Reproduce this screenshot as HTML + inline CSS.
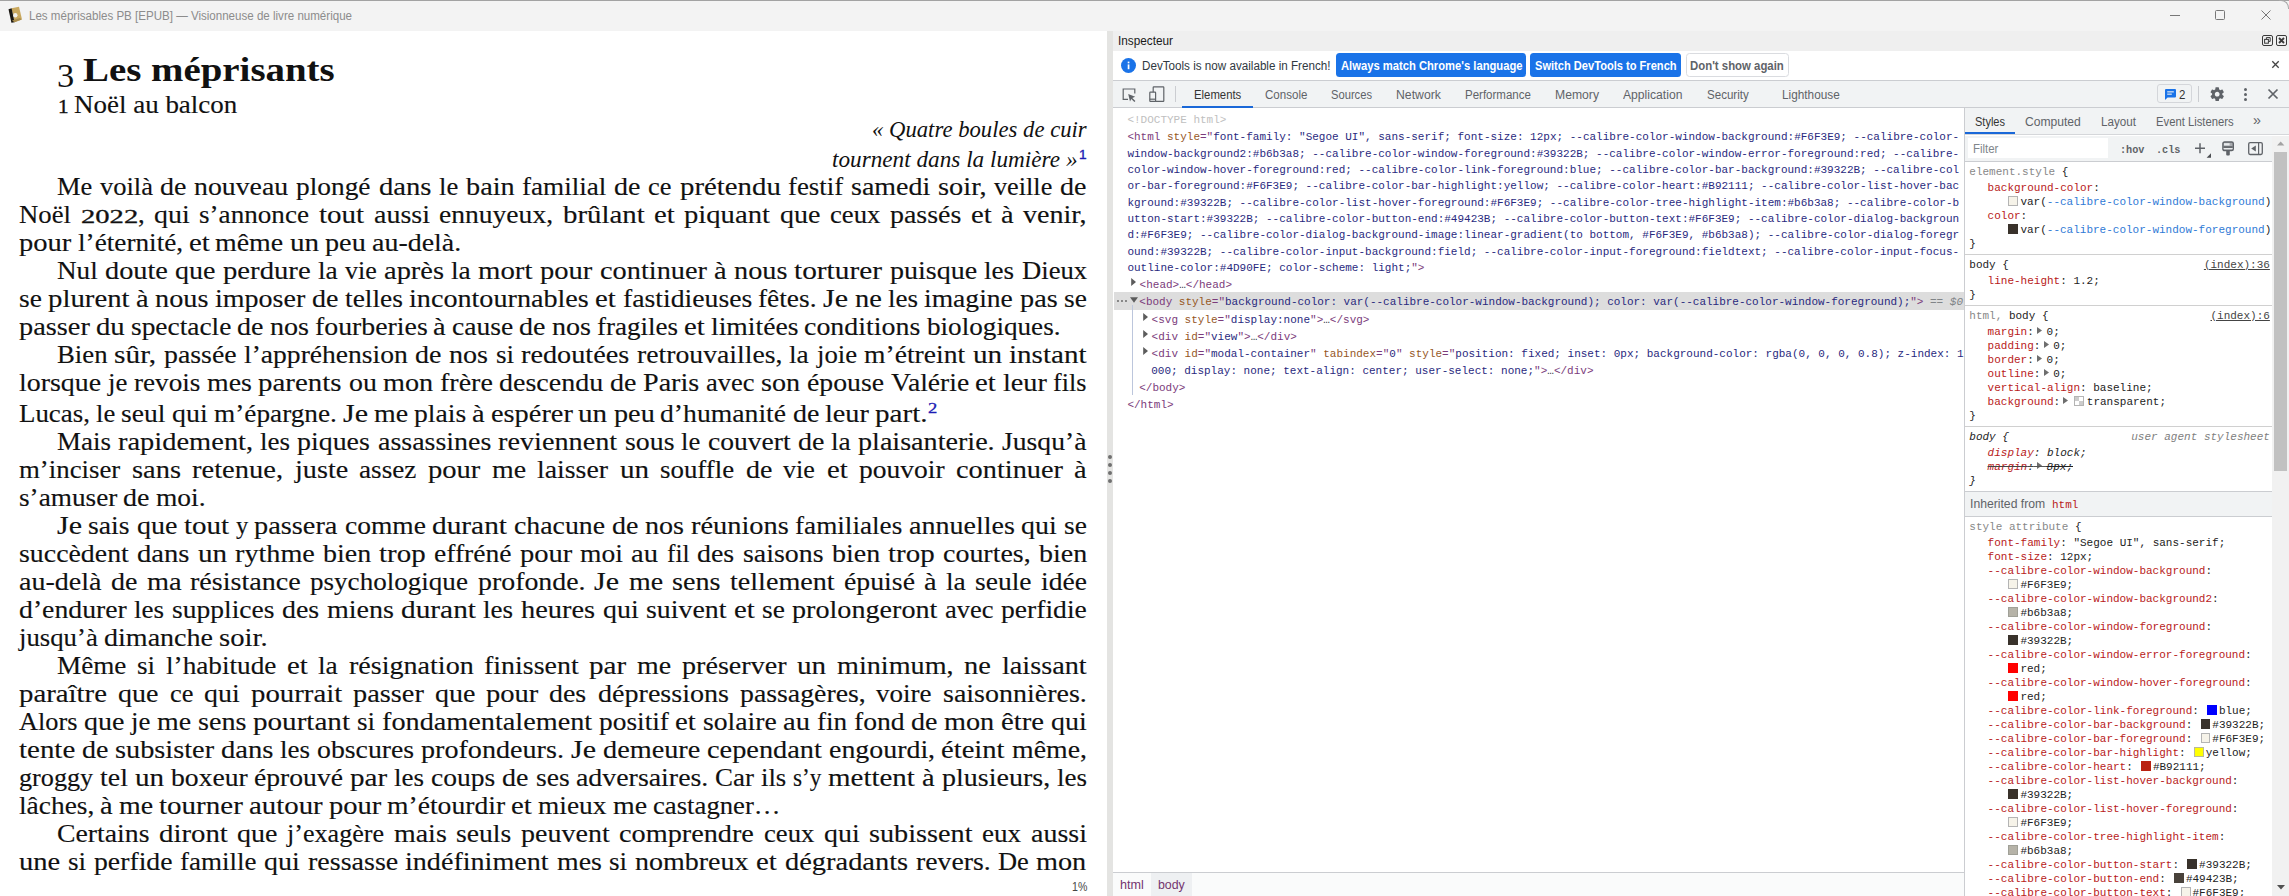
<!DOCTYPE html><html><head><meta charset="utf-8"><title>Visionneuse</title><style>
html,body{margin:0;padding:0;}html{overflow:hidden;width:2289px;height:896px;}
body{width:2289px;height:896px;position:relative;overflow:hidden;background:#fff;}
.t{position:absolute;white-space:pre;line-height:1;margin:0;padding:0;}
svg{position:absolute;overflow:visible}
</style></head><body>
<div style="position:absolute;left:0px;top:0px;width:2289px;height:31px;background:#f3f3f3;"></div>
<div style="position:absolute;left:0px;top:0px;width:2289px;height:1.3px;background:#a2a2a2;"></div>
<div style="position:absolute;left:2279px;top:0.3px;width:10px;height:9px;box-sizing:border-box;border-top:1.2px solid #a9a9a9;border-right:1.2px solid #a9a9a9;border-top-right-radius:8px;"></div>
<div style="position:absolute;left:2279px;top:887px;width:10px;height:9px;box-sizing:border-box;border-bottom:1.2px solid #a9a9a9;border-right:1.2px solid #a9a9a9;border-bottom-right-radius:8px;"></div>
<div style="position:absolute;left:0px;top:887px;width:10px;height:9px;box-sizing:border-box;border-bottom:1.2px solid #a9a9a9;border-left:1.2px solid #a9a9a9;border-bottom-left-radius:8px;"></div>
<div style="position:absolute;left:0px;top:31px;width:1107px;height:865px;background:#ffffff;"></div>
<div style="position:absolute;left:1107px;top:31px;width:6px;height:865px;background:#e4e4e2;"></div>
<div style="position:absolute;left:1113px;top:31px;width:1176px;height:19.5px;background:#efefef;"></div>
<div style="position:absolute;left:1113px;top:50.5px;width:1176px;height:30px;background:#ffffff;"></div>
<div style="position:absolute;left:1113px;top:80px;width:1176px;height:1px;background:#cbcdd1;"></div>
<div style="position:absolute;left:1113px;top:81px;width:1176px;height:26px;background:#f1f3f4;"></div>
<div style="position:absolute;left:1113px;top:107px;width:1176px;height:1px;background:#cbcdd1;"></div>
<div style="position:absolute;left:1182px;top:105.5px;width:71px;height:2.5px;background:#1a68d8;"></div>
<div style="position:absolute;left:1113px;top:108px;width:851px;height:764px;background:#ffffff;"></div>
<div style="position:absolute;left:1964px;top:108px;width:1px;height:788px;background:#cbcdd1;"></div>
<div style="position:absolute;left:1965px;top:108px;width:324px;height:26.5px;background:#f1f3f4;"></div>
<div style="position:absolute;left:1965px;top:132.3px;width:50px;height:2px;background:#1a68d8;"></div>
<div style="position:absolute;left:1965px;top:134px;width:324px;height:1px;background:#d5d7da;"></div>
<div style="position:absolute;left:1965px;top:135.5px;width:324px;height:26px;background:#f1f3f4;"></div>
<div style="position:absolute;left:1968px;top:138px;width:140px;height:20px;background:#ffffff;"></div>
<div style="position:absolute;left:1965px;top:161px;width:307px;height:1px;background:#cbcdd1;"></div>
<div style="position:absolute;left:1965px;top:162px;width:307px;height:734px;background:#ffffff;"></div>
<div style="position:absolute;left:2272px;top:135.5px;width:17px;height:760.5px;background:#f1f1f1;"></div>
<div style="position:absolute;left:2274px;top:152px;width:13px;height:318.5px;background:#c1c1c1;"></div>
<div style="position:absolute;left:1965px;top:254px;width:307px;height:1px;background:#d0d0d0;"></div>
<div style="position:absolute;left:1965px;top:305px;width:307px;height:1px;background:#d0d0d0;"></div>
<div style="position:absolute;left:1965px;top:426px;width:307px;height:1px;background:#d0d0d0;"></div>
<div style="position:absolute;left:1965px;top:491px;width:307px;height:25.5px;background:#f1f3f4;"></div>
<div style="position:absolute;left:1965px;top:491px;width:307px;height:1px;background:#cbcdd1;"></div>
<div style="position:absolute;left:1965px;top:516px;width:307px;height:1px;background:#cbcdd1;"></div>
<div style="position:absolute;left:1113px;top:872px;width:851px;height:1px;background:#cbcdd1;"></div>
<div style="position:absolute;left:1113px;top:873px;width:851px;height:23px;background:#fafbfb;"></div>
<div style="position:absolute;left:1151px;top:873px;width:41px;height:23px;background:#eef0f2;"></div>
<div style="position:absolute;left:1114px;top:292px;width:850px;height:17.6px;background:#dddddd;"></div>
<div style="position:absolute;left:1132px;top:305px;width:1px;height:89.5px;background:#bcc6dc;"></div>
<div style="position:absolute;left:1108px;top:455px;width:4px;height:4px;background:#707070;border-radius:50%"></div>
<div style="position:absolute;left:1108px;top:463px;width:4px;height:4px;background:#707070;border-radius:50%"></div>
<div style="position:absolute;left:1108px;top:471px;width:4px;height:4px;background:#707070;border-radius:50%"></div>
<div style="position:absolute;left:1108px;top:479px;width:4px;height:4px;background:#707070;border-radius:50%"></div>
<svg style="left:7px;top:6px" width="16" height="18" viewBox="0 0 16 18">
<path d="M4.5 2.2 L12 0.8 L15 13.5 L7.5 16.2 Z" fill="#c9a85e"/>
<path d="M1.5 3.2 L4.6 2.2 L7.6 16.2 L4.4 16.8 Z" fill="#1a1712"/>
<circle cx="8.3" cy="9.3" r="2.2" fill="#f2f0ea"/>
<path d="M5 14.5 L13 12 L14.5 13.6 L7.5 16.2Z" fill="#a88c4e"/></svg>
<svg style="left:2160px;top:4px" width="120" height="24" viewBox="0 0 120 24" fill="none" stroke="#777" stroke-width="1">
<path d="M10 11.5 H20"/><rect x="55.5" y="6.5" width="9" height="9" rx="1"/><path d="M101.5 6.5 L110.5 15.5 M110.5 6.5 L101.5 15.5"/></svg>
<svg style="left:2262px;top:35px" width="26" height="11" viewBox="0 0 26 11" fill="none" stroke="#3a3a3a" stroke-width="1">
<rect x="0.5" y="0.5" width="10" height="10" rx="1.5"/><rect x="2.6" y="4.4" width="3.8" height="3.8"/><path d="M4.4 4.2 V2.6 H8.2 V6.4 H6.6"/>
<rect x="14.5" y="0.5" width="10" height="10" rx="1.5"/><path d="M17 3 L22 8 M22 3 L17 8" stroke-width="1.8"/></svg>
<svg style="left:1120.5px;top:57.5px" width="15" height="15" viewBox="0 0 15 15"><circle cx="7.5" cy="7.5" r="7.5" fill="#1a73e8"/>
<rect x="6.7" y="6.4" width="1.7" height="4.8" fill="#fff"/><rect x="6.7" y="3.6" width="1.7" height="1.7" fill="#fff"/></svg>
<div style="position:absolute;left:1336px;top:53px;width:190px;height:24px;background:#1a73e8;border-radius:3.5px"></div>
<div style="position:absolute;left:1530px;top:53px;width:151px;height:24px;background:#1a73e8;border-radius:3.5px"></div>
<div style="position:absolute;left:1685.5px;top:53px;width:103px;height:24px;background:#fff;border-radius:3.5px;box-sizing:border-box;border:1px solid #dadce0"></div>
<svg style="left:2271.5px;top:61px" width="7" height="7" viewBox="0 0 7 7" stroke="#444" stroke-width="1.3"><path d="M0.3 0.3 L6.7 6.7 M6.7 0.3 L0.3 6.7"/></svg>
<div style="position:absolute;left:1175px;top:86px;width:1px;height:16px;background:#cbcdd1;"></div>
<svg style="left:1122px;top:88px" width="15" height="15" viewBox="0 0 15 15" fill="none" stroke="#5f6368" stroke-width="1.2">
<path d="M6 11.4 H1.2 V1 H12.8 V5.6"/><path d="M6.2 6 L13.2 8.7 L10.3 9.9 L13.4 13 L12.4 14 L9.3 10.9 L8 13.6 Z" fill="#5f6368" stroke="none"/></svg>
<svg style="left:1148.5px;top:85.5px" width="16" height="17" viewBox="0 0 16 17" fill="none" stroke="#5f6368" stroke-width="1.2">
<rect x="4.2" y="0.8" width="10.6" height="14.6" rx="0.6"/><rect x="0.8" y="6.2" width="5.8" height="9.2" rx="0.6" fill="#f1f3f4"/><path d="M0.8 13.2 H6.6" /></svg>
<div style="position:absolute;left:2157.3px;top:84.3px;width:34.4px;height:19.2px;background:#f1f3f4;box-sizing:border-box;border:1px solid #d4d6da;border-radius:3px"></div>
<svg style="left:2164.5px;top:88.5px" width="11" height="11" viewBox="0 0 11 11"><path d="M1 0 H10 A1 1 0 0 1 11 1 V7.6 A1 1 0 0 1 10 8.6 H2.6 L0 11 V1 A1 1 0 0 1 1 0Z" fill="#1a73e8"/>
<rect x="2.2" y="2.3" width="6.6" height="1.1" fill="#f1f3f4"/><rect x="2.2" y="4.6" width="4.6" height="1.1" fill="#f1f3f4"/></svg>
<div style="position:absolute;left:2198px;top:86px;width:1px;height:16px;background:#cbcdd1;"></div>
<svg style="left:2208.7px;top:85.8px" width="16.4" height="16.4" viewBox="0 0 24 24"><path fill="#5f6368" d="M19.43 12.98c.04-.32.07-.64.07-.98s-.03-.66-.07-.98l2.11-1.65c.19-.15.24-.42.12-.64l-2-3.46c-.12-.22-.39-.3-.61-.22l-2.49 1c-.52-.4-1.08-.73-1.69-.98l-.38-2.65A.488.488 0 0 0 14 2h-4c-.25 0-.46.18-.49.42l-.38 2.65c-.61.25-1.17.59-1.69.98l-2.49-1c-.23-.09-.49 0-.61.22l-2 3.46c-.13.22-.07.49.12.64l2.11 1.65c-.04.32-.07.65-.07.98s.03.66.07.98l-2.11 1.65c-.19.15-.24.42-.12.64l2 3.46c.12.22.39.3.61.22l2.49-1c.52.4 1.08.73 1.69.98l.38 2.65c.03.24.24.42.49.42h4c.25 0 .46-.18.49-.42l.38-2.65c.61-.25 1.17-.59 1.69-.98l2.49 1c.23.09.49 0 .61-.22l2-3.46c.12-.22.07-.49-.12-.64l-2.11-1.65zM12 15.5c-1.93 0-3.500-1.57-3.500-3.500s1.570-3.500 3.500-3.500 3.500 1.570 3.500 3.500-1.570 3.500-3.500 3.500z"/></svg>
<div style="position:absolute;left:2244px;top:88.2px;width:3px;height:3px;background:#5f6368;border-radius:50%"></div>
<div style="position:absolute;left:2244px;top:93.1px;width:3px;height:3px;background:#5f6368;border-radius:50%"></div>
<div style="position:absolute;left:2244px;top:98.1px;width:3px;height:3px;background:#5f6368;border-radius:50%"></div>
<svg style="left:2268px;top:89px" width="10" height="10" viewBox="0 0 10 10" stroke="#5f6368" stroke-width="1.7"><path d="M0.5 0.5 L9.5 9.5 M9.5 0.5 L0.5 9.5"/></svg>
<svg style="left:2195px;top:143px" width="17" height="15" viewBox="0 0 17 15"><path d="M5 0.3 V10.3 M0 5.3 H10" stroke="#5f6368" stroke-width="1.5" fill="none"/><path d="M16 10.2 V14.7 H11.6Z" fill="#4a4d51"/></svg>
<svg style="left:2222px;top:141px" width="12" height="15" viewBox="0 0 12 15"><rect x="0.9" y="1" width="10.4" height="8.6" rx="1.6" fill="#a9acb0" stroke="#5f6368" stroke-width="1.4"/><rect x="1.6" y="5.2" width="9" height="1.7" fill="#5f6368"/><rect x="1.6" y="7" width="9" height="0.9" fill="#f1f3f4"/><rect x="2" y="2.2" width="5.6" height="2.2" fill="#e9ebed"/><rect x="4.2" y="9.6" width="3.6" height="4.9" rx="0.9" fill="#5f6368"/></svg>
<svg style="left:2248px;top:141.8px" width="15" height="13.2" viewBox="0 0 15 13.2"><rect x="0.7" y="0.7" width="13.6" height="11.8" rx="1.4" fill="none" stroke="#5f6368" stroke-width="1.3"/><path d="M10.6 0.7 V12.5" stroke="#5f6368" stroke-width="1.2"/><path d="M7.8 3.6 V9.6 L3.2 6.6Z" fill="#5f6368"/></svg>
<svg style="left:2276.8px;top:141.3px" width="7.4" height="4.6" viewBox="0 0 8 5"><path d="M0 5 L4 0.5 L8 5Z" fill="#a3a3a3"/></svg>
<svg style="left:2276.5px;top:885px" width="8" height="5" viewBox="0 0 8 5"><path d="M0 0 L4 4.5 L8 0Z" fill="#505050"/></svg>
<svg style="left:1131px;top:278.3px" width="5.4" height="8" viewBox="0 0 5.4 8"><path d="M0.2 0 L5 4 L0.2 8Z" fill="#5c5c5c"/></svg>
<div style="position:absolute;left:1117.2px;top:300px;width:1.8px;height:1.8px;background:#6e6e6e;border-radius:50%"></div>
<div style="position:absolute;left:1121.2px;top:300px;width:1.8px;height:1.8px;background:#6e6e6e;border-radius:50%"></div>
<div style="position:absolute;left:1125.2px;top:300px;width:1.8px;height:1.8px;background:#6e6e6e;border-radius:50%"></div>
<svg style="left:1129.7px;top:296.7px" width="8" height="6" viewBox="0 0 8 6"><path d="M0 0.3 H8 L4 5.7Z" fill="#5c5c5c"/></svg>
<svg style="left:1143px;top:313.3px" width="5.4" height="8" viewBox="0 0 5.4 8"><path d="M0.2 0 L5 4 L0.2 8Z" fill="#5c5c5c"/></svg>
<svg style="left:1143px;top:330.3px" width="5.4" height="8" viewBox="0 0 5.4 8"><path d="M0.2 0 L5 4 L0.2 8Z" fill="#5c5c5c"/></svg>
<svg style="left:1143px;top:347.3px" width="5.4" height="8" viewBox="0 0 5.4 8"><path d="M0.2 0 L5 4 L0.2 8Z" fill="#5c5c5c"/></svg>
<div style="position:absolute;left:2008.2px;top:196.4px;width:9.8px;height:9.8px;background:#F6F3E9;box-sizing:border-box;border:1px solid #b4b4b4"></div>
<div style="position:absolute;left:2008.2px;top:224.20000000000002px;width:9.8px;height:9.8px;background:#39322B;box-sizing:border-box;border:1px solid #39322B"></div>
<svg style="left:2037.0px;top:327.0px" width="5" height="7" viewBox="0 0 5 7"><path d="M0 0 L5 3.5 L0 7Z" fill="#6e6e6e"/></svg>
<svg style="left:2043.6px;top:341.0px" width="5" height="7" viewBox="0 0 5 7"><path d="M0 0 L5 3.5 L0 7Z" fill="#6e6e6e"/></svg>
<svg style="left:2037.0px;top:355.0px" width="5" height="7" viewBox="0 0 5 7"><path d="M0 0 L5 3.5 L0 7Z" fill="#6e6e6e"/></svg>
<svg style="left:2043.6px;top:369.0px" width="5" height="7" viewBox="0 0 5 7"><path d="M0 0 L5 3.5 L0 7Z" fill="#6e6e6e"/></svg>
<svg style="left:2063.3px;top:397.0px" width="5" height="7" viewBox="0 0 5 7"><path d="M0 0 L5 3.5 L0 7Z" fill="#6e6e6e"/></svg>
<div style="position:absolute;left:2074.3px;top:396.0px;width:9.8px;height:9.8px;box-sizing:border-box;border:1px solid #b4b4b4;background:#fff"><div style="position:absolute;left:0;top:0;width:4px;height:4px;background:#ccc"></div><div style="position:absolute;left:4px;top:4px;width:3.8px;height:3.8px;background:#ccc"></div></div>
<svg style="left:2037px;top:462.4px" width="5" height="7" viewBox="0 0 5 7"><path d="M0 0 L5 3.5 L0 7Z" fill="#6e6e6e"/></svg>
<div style="position:absolute;left:2033.8px;top:465.6px;width:13px;height:1px;background:#555;"></div>
<div style="position:absolute;left:2008.2px;top:579.1999999999999px;width:9.8px;height:9.8px;background:#F6F3E9;box-sizing:border-box;border:1px solid #b4b4b4"></div>
<div style="position:absolute;left:2008.2px;top:607.1999999999999px;width:9.8px;height:9.8px;background:#b6b3a8;box-sizing:border-box;border:1px solid #a0a097"></div>
<div style="position:absolute;left:2008.2px;top:635.1999999999999px;width:9.8px;height:9.8px;background:#39322B;box-sizing:border-box;border:1px solid #39322B"></div>
<div style="position:absolute;left:2008.2px;top:663.1999999999999px;width:9.8px;height:9.8px;background:#ff0000;box-sizing:border-box;border:1px solid #ff0000"></div>
<div style="position:absolute;left:2008.2px;top:691.1999999999999px;width:9.8px;height:9.8px;background:#ff0000;box-sizing:border-box;border:1px solid #ff0000"></div>
<div style="position:absolute;left:2207.2000000000003px;top:705.1999999999999px;width:9.8px;height:9.8px;background:#0000ff;box-sizing:border-box;border:1px solid #0000ff"></div>
<div style="position:absolute;left:2200.6px;top:719.1999999999999px;width:9.8px;height:9.8px;background:#39322B;box-sizing:border-box;border:1px solid #39322B"></div>
<div style="position:absolute;left:2200.6px;top:733.1999999999999px;width:9.8px;height:9.8px;background:#F6F3E9;box-sizing:border-box;border:1px solid #b4b4b4"></div>
<div style="position:absolute;left:2194.0px;top:747.1999999999999px;width:9.8px;height:9.8px;background:#ffff00;box-sizing:border-box;border:1px solid #b9b99a"></div>
<div style="position:absolute;left:2141.2000000000003px;top:761.1999999999999px;width:9.8px;height:9.8px;background:#B92111;box-sizing:border-box;border:1px solid #B92111"></div>
<div style="position:absolute;left:2008.2px;top:789.1999999999999px;width:9.8px;height:9.8px;background:#39322B;box-sizing:border-box;border:1px solid #39322B"></div>
<div style="position:absolute;left:2008.2px;top:817.1999999999999px;width:9.8px;height:9.8px;background:#F6F3E9;box-sizing:border-box;border:1px solid #b4b4b4"></div>
<div style="position:absolute;left:2008.2px;top:845.1999999999999px;width:9.8px;height:9.8px;background:#b6b3a8;box-sizing:border-box;border:1px solid #a0a097"></div>
<div style="position:absolute;left:2187.4px;top:859.1999999999999px;width:9.8px;height:9.8px;background:#39322B;box-sizing:border-box;border:1px solid #39322B"></div>
<div style="position:absolute;left:2174.2000000000003px;top:873.1999999999999px;width:9.8px;height:9.8px;background:#49423B;box-sizing:border-box;border:1px solid #49423B"></div>
<div style="position:absolute;left:2180.8px;top:887.1999999999999px;width:9.8px;height:9.8px;background:#F6F3E9;box-sizing:border-box;border:1px solid #b4b4b4"></div>
<div class="t" style="left:28.50px;top:9.70px;font-family:'Liberation Sans', sans-serif;font-size:12px;color:#8c8c8c;transform:scaleX(0.9634);transform-origin:0 0;">Les méprisables PB [EPUB] — Visionneuse de livre numérique</div>
<div class="t" style="left:1117.50px;top:34.80px;font-family:'Liberation Sans', sans-serif;font-size:12px;color:#1a1a1a;transform:scaleX(0.9813);transform-origin:0 0;">Inspecteur</div>
<div class="t" style="left:1141.70px;top:60.00px;font-family:'Liberation Sans', sans-serif;font-size:12px;color:#303942;transform:scaleX(0.9712);transform-origin:0 0;">DevTools is now available in French!</div>
<div class="t" style="left:1340.50px;top:60.00px;font-family:'Liberation Sans', sans-serif;font-size:12px;color:#fff;font-weight:bold;transform:scaleX(0.9344);transform-origin:0 0;">Always match Chrome's language</div>
<div class="t" style="left:1534.70px;top:60.00px;font-family:'Liberation Sans', sans-serif;font-size:12px;color:#fff;font-weight:bold;transform:scaleX(0.9246);transform-origin:0 0;">Switch DevTools to French</div>
<div class="t" style="left:1690.00px;top:60.00px;font-family:'Liberation Sans', sans-serif;font-size:12px;color:#5f6368;font-weight:bold;transform:scaleX(0.9488);transform-origin:0 0;">Don't show again</div>
<div class="t" style="left:1194.00px;top:88.80px;font-family:'Liberation Sans', sans-serif;font-size:12px;color:#333;transform:scaleX(0.9454);transform-origin:0 0;">Elements</div>
<div class="t" style="left:1264.60px;top:88.80px;font-family:'Liberation Sans', sans-serif;font-size:12px;color:#5f6368;transform:scaleX(0.9630);transform-origin:0 0;">Console</div>
<div class="t" style="left:1330.70px;top:88.80px;font-family:'Liberation Sans', sans-serif;font-size:12px;color:#5f6368;transform:scaleX(0.9312);transform-origin:0 0;">Sources</div>
<div class="t" style="left:1395.70px;top:88.80px;font-family:'Liberation Sans', sans-serif;font-size:12px;color:#5f6368;transform:scaleX(1.0201);transform-origin:0 0;">Network</div>
<div class="t" style="left:1465.10px;top:88.80px;font-family:'Liberation Sans', sans-serif;font-size:12px;color:#5f6368;transform:scaleX(0.9592);transform-origin:0 0;">Performance</div>
<div class="t" style="left:1555.00px;top:88.80px;font-family:'Liberation Sans', sans-serif;font-size:12px;color:#5f6368;transform:scaleX(1.0151);transform-origin:0 0;">Memory</div>
<div class="t" style="left:1622.80px;top:88.80px;font-family:'Liberation Sans', sans-serif;font-size:12px;color:#5f6368;transform:scaleX(1.0116);transform-origin:0 0;">Application</div>
<div class="t" style="left:1706.60px;top:88.80px;font-family:'Liberation Sans', sans-serif;font-size:12px;color:#5f6368;transform:scaleX(0.9640);transform-origin:0 0;">Security</div>
<div class="t" style="left:1782.20px;top:88.80px;font-family:'Liberation Sans', sans-serif;font-size:12px;color:#5f6368;transform:scaleX(0.9827);transform-origin:0 0;">Lighthouse</div>
<div class="t" style="left:2178.70px;top:88.70px;font-family:'Liberation Sans', sans-serif;font-size:12px;color:#333;transform:scaleX(0.9570);transform-origin:0 0;">2</div>
<div class="t" style="left:1974.80px;top:115.80px;font-family:'Liberation Sans', sans-serif;font-size:12px;color:#333;transform:scaleX(0.9178);transform-origin:0 0;">Styles</div>
<div class="t" style="left:2024.70px;top:115.80px;font-family:'Liberation Sans', sans-serif;font-size:12px;color:#5f6368;transform:scaleX(1.0077);transform-origin:0 0;">Computed</div>
<div class="t" style="left:2101.00px;top:115.80px;font-family:'Liberation Sans', sans-serif;font-size:12px;color:#5f6368;transform:scaleX(0.9714);transform-origin:0 0;">Layout</div>
<div class="t" style="left:2156.20px;top:115.80px;font-family:'Liberation Sans', sans-serif;font-size:12px;color:#5f6368;transform:scaleX(0.9381);transform-origin:0 0;">Event Listeners</div>
<div class="t" style="left:2252.50px;top:113.30px;font-family:'Liberation Sans', sans-serif;font-size:14px;color:#5f6368;transform:scaleX(1.0261);transform-origin:0 0;">»</div>
<div class="t" style="left:1972.60px;top:142.90px;font-family:'Liberation Sans', sans-serif;font-size:12px;color:#80868b;transform:scaleX(0.9523);transform-origin:0 0;">Filter</div>
<div class="t" style="left:2119.50px;top:144.50px;font-family:'Liberation Mono', monospace;font-size:11px;color:#5f6368;font-weight:bold;transform:scaleX(0.9278);transform-origin:0 0;">:hov</div>
<div class="t" style="left:2156.20px;top:144.50px;font-family:'Liberation Mono', monospace;font-size:11px;color:#5f6368;font-weight:bold;transform:scaleX(0.9278);transform-origin:0 0;">.cls</div>
<div class="t" style="left:1120.40px;top:878.70px;font-family:'Liberation Sans', sans-serif;font-size:12px;color:#74356f;transform:scaleX(1.0498);transform-origin:0 0;">html</div>
<div class="t" style="left:1158.40px;top:878.70px;font-family:'Liberation Sans', sans-serif;font-size:12px;color:#74356f;transform:scaleX(1.0295);transform-origin:0 0;">body</div>
<div class="t" style="left:1072.00px;top:880.60px;font-family:'Liberation Sans', sans-serif;font-size:12px;color:#454545;transform:scaleX(0.8822);transform-origin:0 0;">1%</div>
<div class="t" style="left:1127.40px;top:114.60px;font-family:'Liberation Mono', monospace;font-size:11px;color:#303942;"><span style="color:#c0c0c0;">&lt;!DOCTYPE html&gt;</span></div>
<div class="t" style="left:1127.40px;top:131.80px;font-family:'Liberation Mono', monospace;font-size:11px;color:#303942;"><span style="color:#7b3b7b;">&lt;html</span><span style="color:#96571f;"> style</span><span style="color:#7b3b7b;">="</span><span style="color:#29297e;">font-family</span><span style="color:#29297e;">: "Segoe UI", sans-serif; font-size: 12px; --calibre-color-window-background:#F6F3E9; --calibre-color-</span></div>
<div class="t" style="left:1127.40px;top:148.75px;font-family:'Liberation Mono', monospace;font-size:11px;color:#303942;"><span style="color:#29297e;">window-background2:#b6b3a8; --calibre-color-window-foreground:#39322B; --calibre-color-window-error-foreground:red; --calibre-</span></div>
<div class="t" style="left:1127.40px;top:165.20px;font-family:'Liberation Mono', monospace;font-size:11px;color:#303942;"><span style="color:#29297e;">color-window-hover-foreground:red; --calibre-color-link-foreground:blue; --calibre-color-bar-background:#39322B; --calibre-col</span></div>
<div class="t" style="left:1127.40px;top:181.25px;font-family:'Liberation Mono', monospace;font-size:11px;color:#303942;"><span style="color:#29297e;">or-bar-foreground:#F6F3E9; --calibre-color-bar-highlight:yellow; --calibre-color-heart:#B92111; --calibre-color-list-hover-bac</span></div>
<div class="t" style="left:1127.40px;top:197.90px;font-family:'Liberation Mono', monospace;font-size:11px;color:#303942;"><span style="color:#29297e;">kground:#39322B; --calibre-color-list-hover-foreground:#F6F3E9; --calibre-color-tree-highlight-item:#b6b3a8; --calibre-color-b</span></div>
<div class="t" style="left:1127.40px;top:213.90px;font-family:'Liberation Mono', monospace;font-size:11px;color:#303942;"><span style="color:#29297e;">utton-start:#39322B; --calibre-color-button-end:#49423B; --calibre-color-button-text:#F6F3E9; --calibre-color-dialog-backgroun</span></div>
<div class="t" style="left:1127.40px;top:229.80px;font-family:'Liberation Mono', monospace;font-size:11px;color:#303942;"><span style="color:#29297e;">d:#F6F3E9; --calibre-color-dialog-background-image:linear-gradient(to bottom, #F6F3E9, #b6b3a8); --calibre-color-dialog-foregr</span></div>
<div class="t" style="left:1127.40px;top:246.80px;font-family:'Liberation Mono', monospace;font-size:11px;color:#303942;"><span style="color:#29297e;">ound:#39322B; --calibre-color-input-background:field; --calibre-color-input-foreground:fieldtext; --calibre-color-input-focus-</span></div>
<div class="t" style="left:1127.40px;top:262.70px;font-family:'Liberation Mono', monospace;font-size:11px;color:#303942;"><span style="color:#29297e;">outline-color:#4D90FE; color-scheme: light;</span><span style="color:#7b3b7b;">"&gt;</span></div>
<div class="t" style="left:1139.60px;top:280.00px;font-family:'Liberation Mono', monospace;font-size:11px;color:#303942;"><span style="color:#7b3b7b;">&lt;head&gt;</span><span style="color:#303942;">…</span><span style="color:#7b3b7b;">&lt;/head&gt;</span></div>
<div class="t" style="left:1139.30px;top:297.00px;font-family:'Liberation Mono', monospace;font-size:11px;color:#303942;letter-spacing:-0.012px;"><span style="color:#7b3b7b;">&lt;body</span><span style="color:#96571f;"> style</span><span style="color:#7b3b7b;">="</span><span style="color:#29297e;">background-color: var(--calibre-color-window-background); color: var(--calibre-color-window-foreground);</span><span style="color:#7b3b7b;">"&gt;</span><span style="color:#808488;"> == </span><span style="color:#808488;font-style:italic">$0</span></div>
<div class="t" style="left:1151.60px;top:314.90px;font-family:'Liberation Mono', monospace;font-size:11px;color:#303942;"><span style="color:#7b3b7b;">&lt;svg</span><span style="color:#96571f;"> style</span><span style="color:#7b3b7b;">="</span><span style="color:#29297e;">display:none</span><span style="color:#7b3b7b;">"&gt;</span><span style="color:#303942;">…</span><span style="color:#7b3b7b;">&lt;/svg&gt;</span></div>
<div class="t" style="left:1151.60px;top:331.80px;font-family:'Liberation Mono', monospace;font-size:11px;color:#303942;"><span style="color:#7b3b7b;">&lt;div</span><span style="color:#96571f;"> id</span><span style="color:#7b3b7b;">="</span><span style="color:#29297e;">view</span><span style="color:#7b3b7b;">"&gt;</span><span style="color:#303942;">…</span><span style="color:#7b3b7b;">&lt;/div&gt;</span></div>
<div class="t" style="left:1151.60px;top:348.80px;font-family:'Liberation Mono', monospace;font-size:11px;color:#303942;"><span style="color:#7b3b7b;">&lt;div</span><span style="color:#96571f;"> id</span><span style="color:#7b3b7b;">="</span><span style="color:#29297e;">modal-container</span><span style="color:#7b3b7b;">"</span><span style="color:#96571f;"> tabindex</span><span style="color:#7b3b7b;">="</span><span style="color:#29297e;">0</span><span style="color:#7b3b7b;">"</span><span style="color:#96571f;"> style</span><span style="color:#7b3b7b;">="</span><span style="color:#29297e;">position: fixed; inset: 0px; background-color: rgba(0, 0, 0, 0.8); z-index: 1</span></div>
<div class="t" style="left:1151.20px;top:365.75px;font-family:'Liberation Mono', monospace;font-size:11px;color:#303942;"><span style="color:#29297e;">000; display: none; text-align: center; user-select: none;</span><span style="color:#7b3b7b;">"&gt;</span><span style="color:#303942;">…</span><span style="color:#7b3b7b;">&lt;/div&gt;</span></div>
<div class="t" style="left:1139.20px;top:382.70px;font-family:'Liberation Mono', monospace;font-size:11px;color:#303942;"><span style="color:#7b3b7b;">&lt;/body&gt;</span></div>
<div class="t" style="left:1127.40px;top:399.90px;font-family:'Liberation Mono', monospace;font-size:11px;color:#303942;"><span style="color:#7b3b7b;">&lt;/html&gt;</span></div>
<div class="t" style="left:1969.30px;top:166.70px;font-family:'Liberation Mono', monospace;font-size:11px;color:#222;"><span style="color:#888;">element.style</span><span style="color:#222;"> {</span></div>
<div class="t" style="left:1987.60px;top:182.70px;font-family:'Liberation Mono', monospace;font-size:11px;color:#222;"><span style="color:#b81a1a;">background-color</span><span style="color:#222;">:</span></div>
<div class="t" style="left:2020.40px;top:197.00px;font-family:'Liberation Mono', monospace;font-size:11px;color:#222;"><span style="color:#222;">var(</span><span style="color:#2f7ad6;">--calibre-color-window-background</span><span style="color:#222;">)</span></div>
<div class="t" style="left:1987.60px;top:210.70px;font-family:'Liberation Mono', monospace;font-size:11px;color:#222;"><span style="color:#b81a1a;">color</span><span style="color:#222;">:</span></div>
<div class="t" style="left:2020.40px;top:224.80px;font-family:'Liberation Mono', monospace;font-size:11px;color:#222;"><span style="color:#222;">var(</span><span style="color:#2f7ad6;">--calibre-color-window-foreground</span><span style="color:#222;">)</span></div>
<div class="t" style="left:1969.30px;top:238.60px;font-family:'Liberation Mono', monospace;font-size:11px;color:#222;">}</div>
<div class="t" style="left:1969.30px;top:259.80px;font-family:'Liberation Mono', monospace;font-size:11px;color:#222;">body {</div>
<div class="t" style="left:2203.88px;top:259.80px;font-family:'Liberation Mono', monospace;font-size:11px;color:#222;"><span style="color:#444;text-decoration:underline">(index):36</span></div>
<div class="t" style="left:1987.60px;top:275.70px;font-family:'Liberation Mono', monospace;font-size:11px;color:#222;"><span style="color:#b81a1a;">line-height</span><span style="color:#222;">: 1.2;</span></div>
<div class="t" style="left:1969.30px;top:289.50px;font-family:'Liberation Mono', monospace;font-size:11px;color:#222;">}</div>
<div class="t" style="left:1969.30px;top:310.80px;font-family:'Liberation Mono', monospace;font-size:11px;color:#222;"><span style="color:#888;">html, </span><span style="color:#222;">body {</span></div>
<div class="t" style="left:2210.48px;top:310.80px;font-family:'Liberation Mono', monospace;font-size:11px;color:#222;"><span style="color:#444;text-decoration:underline">(index):6</span></div>
<div class="t" style="left:1987.60px;top:326.60px;font-family:'Liberation Mono', monospace;font-size:11px;color:#222;"><span style="color:#b81a1a;">margin</span><span style="color:#222;">:</span></div>
<div class="t" style="left:2046.60px;top:326.60px;font-family:'Liberation Mono', monospace;font-size:11px;color:#222;">0;</div>
<div class="t" style="left:1987.60px;top:340.60px;font-family:'Liberation Mono', monospace;font-size:11px;color:#222;"><span style="color:#b81a1a;">padding</span><span style="color:#222;">:</span></div>
<div class="t" style="left:2053.20px;top:340.60px;font-family:'Liberation Mono', monospace;font-size:11px;color:#222;">0;</div>
<div class="t" style="left:1987.60px;top:354.60px;font-family:'Liberation Mono', monospace;font-size:11px;color:#222;"><span style="color:#b81a1a;">border</span><span style="color:#222;">:</span></div>
<div class="t" style="left:2046.60px;top:354.60px;font-family:'Liberation Mono', monospace;font-size:11px;color:#222;">0;</div>
<div class="t" style="left:1987.60px;top:368.60px;font-family:'Liberation Mono', monospace;font-size:11px;color:#222;"><span style="color:#b81a1a;">outline</span><span style="color:#222;">:</span></div>
<div class="t" style="left:2053.20px;top:368.60px;font-family:'Liberation Mono', monospace;font-size:11px;color:#222;">0;</div>
<div class="t" style="left:1987.60px;top:382.60px;font-family:'Liberation Mono', monospace;font-size:11px;color:#222;"><span style="color:#b81a1a;">vertical-align</span><span style="color:#222;">: baseline;</span></div>
<div class="t" style="left:1987.60px;top:396.60px;font-family:'Liberation Mono', monospace;font-size:11px;color:#222;"><span style="color:#b81a1a;">background</span><span style="color:#222;">:</span></div>
<div class="t" style="left:2086.80px;top:396.60px;font-family:'Liberation Mono', monospace;font-size:11px;color:#222;">transparent;</div>
<div class="t" style="left:1969.30px;top:410.60px;font-family:'Liberation Mono', monospace;font-size:11px;color:#222;">}</div>
<div class="t" style="left:1969.30px;top:431.90px;font-family:'Liberation Mono', monospace;font-size:11px;color:#222;font-style:italic;">body {</div>
<div class="t" style="left:2131.28px;top:431.90px;font-family:'Liberation Mono', monospace;font-size:11px;color:#222;font-style:italic;"><span style="color:#808080;">user agent stylesheet</span></div>
<div class="t" style="left:1987.60px;top:447.80px;font-family:'Liberation Mono', monospace;font-size:11px;color:#222;font-style:italic;"><span style="color:#b81a1a;">display</span><span style="color:#222;">: block;</span></div>
<div class="t" style="left:1987.60px;top:462.00px;font-family:'Liberation Mono', monospace;font-size:11px;color:#222;font-style:italic;text-decoration:line-through;text-decoration-color:#444;"><span style="color:#b81a1a;">margin</span><span style="color:#222;">:</span></div>
<div class="t" style="left:2046.60px;top:462.00px;font-family:'Liberation Mono', monospace;font-size:11px;color:#222;font-style:italic;text-decoration:line-through;">8px;</div>
<div class="t" style="left:1969.30px;top:475.80px;font-family:'Liberation Mono', monospace;font-size:11px;color:#222;font-style:italic;">}</div>
<div class="t" style="left:1970.30px;top:498.00px;font-family:'Liberation Sans', sans-serif;font-size:12px;color:#5f6368;transform:scaleX(1.0156);transform-origin:0 0;">Inherited from</div>
<div class="t" style="left:2052.00px;top:500.00px;font-family:'Liberation Mono', monospace;font-size:11px;color:#222;"><span style="color:#b81a1a;">html</span></div>
<div class="t" style="left:1969.30px;top:521.80px;font-family:'Liberation Mono', monospace;font-size:11px;color:#222;"><span style="color:#888;">style attribute</span><span style="color:#222;"> {</span></div>
<div class="t" style="left:1987.60px;top:537.80px;font-family:'Liberation Mono', monospace;font-size:11px;color:#222;"><span style="color:#b81a1a;">font-family</span><span style="color:#222;">: "Segoe UI", sans-serif;</span></div>
<div class="t" style="left:1987.60px;top:551.80px;font-family:'Liberation Mono', monospace;font-size:11px;color:#222;"><span style="color:#b81a1a;">font-size</span><span style="color:#222;">: 12px;</span></div>
<div class="t" style="left:1987.60px;top:565.80px;font-family:'Liberation Mono', monospace;font-size:11px;color:#222;"><span style="color:#b81a1a;">--calibre-color-window-background</span><span style="color:#222;">:</span></div>
<div class="t" style="left:2020.40px;top:579.80px;font-family:'Liberation Mono', monospace;font-size:11px;color:#222;">#F6F3E9;</div>
<div class="t" style="left:1987.60px;top:593.80px;font-family:'Liberation Mono', monospace;font-size:11px;color:#222;"><span style="color:#b81a1a;">--calibre-color-window-background2</span><span style="color:#222;">:</span></div>
<div class="t" style="left:2020.40px;top:607.80px;font-family:'Liberation Mono', monospace;font-size:11px;color:#222;">#b6b3a8;</div>
<div class="t" style="left:1987.60px;top:621.80px;font-family:'Liberation Mono', monospace;font-size:11px;color:#222;"><span style="color:#b81a1a;">--calibre-color-window-foreground</span><span style="color:#222;">:</span></div>
<div class="t" style="left:2020.40px;top:635.80px;font-family:'Liberation Mono', monospace;font-size:11px;color:#222;">#39322B;</div>
<div class="t" style="left:1987.60px;top:649.80px;font-family:'Liberation Mono', monospace;font-size:11px;color:#222;"><span style="color:#b81a1a;">--calibre-color-window-error-foreground</span><span style="color:#222;">:</span></div>
<div class="t" style="left:2020.40px;top:663.80px;font-family:'Liberation Mono', monospace;font-size:11px;color:#222;">red;</div>
<div class="t" style="left:1987.60px;top:677.80px;font-family:'Liberation Mono', monospace;font-size:11px;color:#222;"><span style="color:#b81a1a;">--calibre-color-window-hover-foreground</span><span style="color:#222;">:</span></div>
<div class="t" style="left:2020.40px;top:691.80px;font-family:'Liberation Mono', monospace;font-size:11px;color:#222;">red;</div>
<div class="t" style="left:1987.60px;top:705.80px;font-family:'Liberation Mono', monospace;font-size:11px;color:#222;"><span style="color:#b81a1a;">--calibre-color-link-foreground</span><span style="color:#222;">:</span></div>
<div class="t" style="left:2218.90px;top:705.80px;font-family:'Liberation Mono', monospace;font-size:11px;color:#222;">blue;</div>
<div class="t" style="left:1987.60px;top:719.80px;font-family:'Liberation Mono', monospace;font-size:11px;color:#222;"><span style="color:#b81a1a;">--calibre-color-bar-background</span><span style="color:#222;">:</span></div>
<div class="t" style="left:2212.30px;top:719.80px;font-family:'Liberation Mono', monospace;font-size:11px;color:#222;">#39322B;</div>
<div class="t" style="left:1987.60px;top:733.80px;font-family:'Liberation Mono', monospace;font-size:11px;color:#222;"><span style="color:#b81a1a;">--calibre-color-bar-foreground</span><span style="color:#222;">:</span></div>
<div class="t" style="left:2212.30px;top:733.80px;font-family:'Liberation Mono', monospace;font-size:11px;color:#222;">#F6F3E9;</div>
<div class="t" style="left:1987.60px;top:747.80px;font-family:'Liberation Mono', monospace;font-size:11px;color:#222;"><span style="color:#b81a1a;">--calibre-color-bar-highlight</span><span style="color:#222;">:</span></div>
<div class="t" style="left:2205.70px;top:747.80px;font-family:'Liberation Mono', monospace;font-size:11px;color:#222;">yellow;</div>
<div class="t" style="left:1987.60px;top:761.80px;font-family:'Liberation Mono', monospace;font-size:11px;color:#222;"><span style="color:#b81a1a;">--calibre-color-heart</span><span style="color:#222;">:</span></div>
<div class="t" style="left:2152.90px;top:761.80px;font-family:'Liberation Mono', monospace;font-size:11px;color:#222;">#B92111;</div>
<div class="t" style="left:1987.60px;top:775.80px;font-family:'Liberation Mono', monospace;font-size:11px;color:#222;"><span style="color:#b81a1a;">--calibre-color-list-hover-background</span><span style="color:#222;">:</span></div>
<div class="t" style="left:2020.40px;top:789.80px;font-family:'Liberation Mono', monospace;font-size:11px;color:#222;">#39322B;</div>
<div class="t" style="left:1987.60px;top:803.80px;font-family:'Liberation Mono', monospace;font-size:11px;color:#222;"><span style="color:#b81a1a;">--calibre-color-list-hover-foreground</span><span style="color:#222;">:</span></div>
<div class="t" style="left:2020.40px;top:817.80px;font-family:'Liberation Mono', monospace;font-size:11px;color:#222;">#F6F3E9;</div>
<div class="t" style="left:1987.60px;top:831.80px;font-family:'Liberation Mono', monospace;font-size:11px;color:#222;"><span style="color:#b81a1a;">--calibre-color-tree-highlight-item</span><span style="color:#222;">:</span></div>
<div class="t" style="left:2020.40px;top:845.80px;font-family:'Liberation Mono', monospace;font-size:11px;color:#222;">#b6b3a8;</div>
<div class="t" style="left:1987.60px;top:859.80px;font-family:'Liberation Mono', monospace;font-size:11px;color:#222;"><span style="color:#b81a1a;">--calibre-color-button-start</span><span style="color:#222;">:</span></div>
<div class="t" style="left:2199.10px;top:859.80px;font-family:'Liberation Mono', monospace;font-size:11px;color:#222;">#39322B;</div>
<div class="t" style="left:1987.60px;top:873.80px;font-family:'Liberation Mono', monospace;font-size:11px;color:#222;"><span style="color:#b81a1a;">--calibre-color-button-end</span><span style="color:#222;">:</span></div>
<div class="t" style="left:2185.90px;top:873.80px;font-family:'Liberation Mono', monospace;font-size:11px;color:#222;">#49423B;</div>
<div class="t" style="left:1987.60px;top:887.80px;font-family:'Liberation Mono', monospace;font-size:11px;color:#222;"><span style="color:#b81a1a;">--calibre-color-button-text</span><span style="color:#222;">:</span></div>
<div class="t" style="left:2192.50px;top:887.80px;font-family:'Liberation Mono', monospace;font-size:11px;color:#222;">#F6F3E9;</div>
<div class="t" style="left:57.40px;top:58.90px;font-family:'Liberation Serif', serif;font-size:34px;color:#111;transform:scaleX(1.0118);transform-origin:0 0;">3</div>
<div class="t" style="left:83.30px;top:53.80px;font-family:'Liberation Serif', serif;font-size:33px;color:#111;font-weight:bold;transform:scaleX(1.1784);transform-origin:0 0;">Les méprisants</div>
<div class="t" style="left:57.60px;top:97.70px;font-family:'Liberation Serif', serif;font-size:18.5px;color:#111;transform:scaleX(1.1459);transform-origin:0 0;-webkit-text-stroke:0.35px #111;">1</div>
<div class="t" style="left:74.00px;top:91.70px;font-family:'Liberation Serif', serif;font-size:26px;color:#111;transform:scaleX(1.0375);transform-origin:0 0;-webkit-text-stroke:0.15px #111;">Noël au balcon</div>
<div class="t" style="left:872.00px;top:118.50px;font-family:'Liberation Serif', serif;font-size:22.5px;color:#111;font-style:italic;transform:scaleX(1.0085);transform-origin:0 0;">« Quatre boules de cuir</div>
<div class="t" style="left:831.50px;top:148.60px;font-family:'Liberation Serif', serif;font-size:22.5px;color:#111;font-style:italic;transform:scaleX(1.0319);transform-origin:0 0;">tournent dans la lumière »</div>
<div class="t" style="left:1079.00px;top:147.70px;font-family:'Liberation Sans', sans-serif;font-size:13px;color:#1c1cb4;transform:scaleX(1.0505);transform-origin:0 0;-webkit-text-stroke:0.35px #1c1cb4;">1</div>
<div class="t" style="left:56.60px;top:173.60px;font-family:'Liberation Serif', serif;font-size:26.0px;color:#111;transform:scaleX(1.0171);transform-origin:0 0;-webkit-text-stroke:0.15px #111;">Me</div>
<div class="t" style="left:99.59px;top:173.60px;font-family:'Liberation Serif', serif;font-size:26.0px;color:#111;transform:scaleX(1.0193);transform-origin:0 0;-webkit-text-stroke:0.15px #111;">voilà</div>
<div class="t" style="left:160.32px;top:173.60px;font-family:'Liberation Serif', serif;font-size:26.0px;color:#111;transform:scaleX(1.0771);transform-origin:0 0;-webkit-text-stroke:0.15px #111;">de</div>
<div class="t" style="left:194.49px;top:173.60px;font-family:'Liberation Serif', serif;font-size:26.0px;color:#111;transform:scaleX(1.0685);transform-origin:0 0;-webkit-text-stroke:0.15px #111;">nouveau</div>
<div class="t" style="left:296.35px;top:173.60px;font-family:'Liberation Serif', serif;font-size:26.0px;color:#111;transform:scaleX(1.0529);transform-origin:0 0;-webkit-text-stroke:0.15px #111;">plongé</div>
<div class="t" style="left:378.58px;top:173.60px;font-family:'Liberation Serif', serif;font-size:26.0px;color:#111;transform:scaleX(1.1013);transform-origin:0 0;-webkit-text-stroke:0.15px #111;">dans</div>
<div class="t" style="left:438.81px;top:173.60px;font-family:'Liberation Serif', serif;font-size:26.0px;color:#111;transform:scaleX(1.0265);transform-origin:0 0;-webkit-text-stroke:0.15px #111;">le</div>
<div class="t" style="left:465.80px;top:173.60px;font-family:'Liberation Serif', serif;font-size:26.0px;color:#111;transform:scaleX(1.0872);transform-origin:0 0;-webkit-text-stroke:0.15px #111;">bain</div>
<div class="t" style="left:522.20px;top:173.60px;font-family:'Liberation Serif', serif;font-size:26.0px;color:#111;transform:scaleX(1.0429);transform-origin:0 0;-webkit-text-stroke:0.15px #111;">familial</div>
<div class="t" style="left:614.25px;top:173.60px;font-family:'Liberation Serif', serif;font-size:26.0px;color:#111;transform:scaleX(1.0771);transform-origin:0 0;-webkit-text-stroke:0.15px #111;">de</div>
<div class="t" style="left:648.42px;top:173.60px;font-family:'Liberation Serif', serif;font-size:26.0px;color:#111;transform:scaleX(1.0154);transform-origin:0 0;-webkit-text-stroke:0.15px #111;">ce</div>
<div class="t" style="left:679.60px;top:173.60px;font-family:'Liberation Serif', serif;font-size:26.0px;color:#111;transform:scaleX(1.1085);transform-origin:0 0;-webkit-text-stroke:0.15px #111;">prétendu</div>
<div class="t" style="left:788.17px;top:173.60px;font-family:'Liberation Serif', serif;font-size:26.0px;color:#111;transform:scaleX(1.0319);transform-origin:0 0;-webkit-text-stroke:0.15px #111;">festif</div>
<div class="t" style="left:851.02px;top:173.60px;font-family:'Liberation Serif', serif;font-size:26.0px;color:#111;transform:scaleX(1.0751);transform-origin:0 0;-webkit-text-stroke:0.15px #111;">samedi</div>
<div class="t" style="left:937.93px;top:173.60px;font-family:'Liberation Serif', serif;font-size:26.0px;color:#111;transform:scaleX(1.0925);transform-origin:0 0;-webkit-text-stroke:0.15px #111;">soir,</div>
<div class="t" style="left:994.24px;top:173.60px;font-family:'Liberation Serif', serif;font-size:26.0px;color:#111;transform:scaleX(1.0091);transform-origin:0 0;-webkit-text-stroke:0.15px #111;">veille</div>
<div class="t" style="left:1060.26px;top:173.60px;font-family:'Liberation Serif', serif;font-size:26.0px;color:#111;transform:scaleX(1.0771);transform-origin:0 0;-webkit-text-stroke:0.15px #111;">de</div>
<div class="t" style="left:19.10px;top:201.60px;font-family:'Liberation Serif', serif;font-size:26.0px;color:#111;transform:scaleX(1.0271);transform-origin:0 0;-webkit-text-stroke:0.15px #111;">Noël</div>
<div class="t" style="left:80.56px;top:206.60px;font-family:'Liberation Serif', serif;font-size:19.5px;color:#111;transform:scaleX(1.4677);transform-origin:0 0;-webkit-text-stroke:0.3px #111;">2022</div>
<div class="t" style="left:137.80px;top:201.60px;font-family:'Liberation Serif', serif;font-size:26.0px;color:#111;transform:scaleX(1.0367);transform-origin:0 0;-webkit-text-stroke:0.15px #111;">,</div>
<div class="t" style="left:154.09px;top:201.60px;font-family:'Liberation Serif', serif;font-size:26.0px;color:#111;transform:scaleX(1.0740);transform-origin:0 0;-webkit-text-stroke:0.15px #111;">qui</div>
<div class="t" style="left:199.33px;top:201.60px;font-family:'Liberation Serif', serif;font-size:26.0px;color:#111;transform:scaleX(1.0433);transform-origin:0 0;-webkit-text-stroke:0.15px #111;">s’annonce</div>
<div class="t" style="left:318.85px;top:201.60px;font-family:'Liberation Serif', serif;font-size:26.0px;color:#111;transform:scaleX(1.1159);transform-origin:0 0;-webkit-text-stroke:0.15px #111;">tout</div>
<div class="t" style="left:373.54px;top:201.60px;font-family:'Liberation Serif', serif;font-size:26.0px;color:#111;transform:scaleX(1.0752);transform-origin:0 0;-webkit-text-stroke:0.15px #111;">aussi</div>
<div class="t" style="left:439.00px;top:201.60px;font-family:'Liberation Serif', serif;font-size:26.0px;color:#111;transform:scaleX(1.0603);transform-origin:0 0;-webkit-text-stroke:0.15px #111;">ennuyeux,</div>
<div class="t" style="left:562.63px;top:201.60px;font-family:'Liberation Serif', serif;font-size:26.0px;color:#111;transform:scaleX(1.1102);transform-origin:0 0;-webkit-text-stroke:0.15px #111;">brûlant</div>
<div class="t" style="left:653.96px;top:201.60px;font-family:'Liberation Serif', serif;font-size:26.0px;color:#111;transform:scaleX(1.1052);transform-origin:0 0;-webkit-text-stroke:0.15px #111;">et</div>
<div class="t" style="left:684.24px;top:201.60px;font-family:'Liberation Serif', serif;font-size:26.0px;color:#111;transform:scaleX(1.1022);transform-origin:0 0;-webkit-text-stroke:0.15px #111;">piquant</div>
<div class="t" style="left:779.77px;top:201.60px;font-family:'Liberation Serif', serif;font-size:26.0px;color:#111;transform:scaleX(1.0778);transform-origin:0 0;-webkit-text-stroke:0.15px #111;">que</div>
<div class="t" style="left:829.78px;top:201.60px;font-family:'Liberation Serif', serif;font-size:26.0px;color:#111;transform:scaleX(1.0267);transform-origin:0 0;-webkit-text-stroke:0.15px #111;">ceux</div>
<div class="t" style="left:889.73px;top:201.60px;font-family:'Liberation Serif', serif;font-size:26.0px;color:#111;transform:scaleX(1.0745);transform-origin:0 0;-webkit-text-stroke:0.15px #111;">passés</div>
<div class="t" style="left:970.67px;top:201.60px;font-family:'Liberation Serif', serif;font-size:26.0px;color:#111;transform:scaleX(1.1052);transform-origin:0 0;-webkit-text-stroke:0.15px #111;">et</div>
<div class="t" style="left:1000.96px;top:201.60px;font-family:'Liberation Serif', serif;font-size:26.0px;color:#111;transform:scaleX(1.0910);transform-origin:0 0;-webkit-text-stroke:0.15px #111;">à</div>
<div class="t" style="left:1023.10px;top:201.60px;font-family:'Liberation Serif', serif;font-size:26.0px;color:#111;transform:scaleX(1.0799);transform-origin:0 0;-webkit-text-stroke:0.15px #111;">venir,</div>
<div class="t" style="left:19.10px;top:229.60px;font-family:'Liberation Serif', serif;font-size:26.0px;color:#111;transform:scaleX(1.0988);transform-origin:0 0;-webkit-text-stroke:0.15px #111;">pour</div>
<div class="t" style="left:77.51px;top:229.60px;font-family:'Liberation Serif', serif;font-size:26.0px;color:#111;transform:scaleX(1.0482);transform-origin:0 0;-webkit-text-stroke:0.15px #111;">l’éternité,</div>
<div class="t" style="left:188.72px;top:229.60px;font-family:'Liberation Serif', serif;font-size:26.0px;color:#111;transform:scaleX(1.1052);transform-origin:0 0;-webkit-text-stroke:0.15px #111;">et</div>
<div class="t" style="left:215.49px;top:229.60px;font-family:'Liberation Serif', serif;font-size:26.0px;color:#111;transform:scaleX(1.0741);transform-origin:0 0;-webkit-text-stroke:0.15px #111;">même</div>
<div class="t" style="left:289.75px;top:229.60px;font-family:'Liberation Serif', serif;font-size:26.0px;color:#111;transform:scaleX(1.1207);transform-origin:0 0;-webkit-text-stroke:0.15px #111;">un</div>
<div class="t" style="left:324.92px;top:229.60px;font-family:'Liberation Serif', serif;font-size:26.0px;color:#111;transform:scaleX(1.0856);transform-origin:0 0;-webkit-text-stroke:0.15px #111;">peu</div>
<div class="t" style="left:371.71px;top:229.60px;font-family:'Liberation Serif', serif;font-size:26.0px;color:#111;transform:scaleX(1.0753);transform-origin:0 0;-webkit-text-stroke:0.15px #111;">au-delà.</div>
<div class="t" style="left:56.60px;top:257.60px;font-family:'Liberation Serif', serif;font-size:26.0px;color:#111;transform:scaleX(1.0442);transform-origin:0 0;-webkit-text-stroke:0.15px #111;">Nul</div>
<div class="t" style="left:104.62px;top:257.60px;font-family:'Liberation Serif', serif;font-size:26.0px;color:#111;transform:scaleX(1.0896);transform-origin:0 0;-webkit-text-stroke:0.15px #111;">doute</div>
<div class="t" style="left:174.85px;top:257.60px;font-family:'Liberation Serif', serif;font-size:26.0px;color:#111;transform:scaleX(1.0778);transform-origin:0 0;-webkit-text-stroke:0.15px #111;">que</div>
<div class="t" style="left:222.61px;top:257.60px;font-family:'Liberation Serif', serif;font-size:26.0px;color:#111;transform:scaleX(1.1042);transform-origin:0 0;-webkit-text-stroke:0.15px #111;">perdure</div>
<div class="t" style="left:317.58px;top:257.60px;font-family:'Liberation Serif', serif;font-size:26.0px;color:#111;transform:scaleX(1.0532);transform-origin:0 0;-webkit-text-stroke:0.15px #111;">la</div>
<div class="t" style="left:344.64px;top:257.60px;font-family:'Liberation Serif', serif;font-size:26.0px;color:#111;transform:scaleX(1.0030);transform-origin:0 0;-webkit-text-stroke:0.15px #111;">vie</div>
<div class="t" style="left:383.79px;top:257.60px;font-family:'Liberation Serif', serif;font-size:26.0px;color:#111;transform:scaleX(1.0941);transform-origin:0 0;-webkit-text-stroke:0.15px #111;">après</div>
<div class="t" style="left:451.11px;top:257.60px;font-family:'Liberation Serif', serif;font-size:26.0px;color:#111;transform:scaleX(1.0532);transform-origin:0 0;-webkit-text-stroke:0.15px #111;">la</div>
<div class="t" style="left:478.16px;top:257.60px;font-family:'Liberation Serif', serif;font-size:26.0px;color:#111;transform:scaleX(1.1074);transform-origin:0 0;-webkit-text-stroke:0.15px #111;">mort</div>
<div class="t" style="left:539.84px;top:257.60px;font-family:'Liberation Serif', serif;font-size:26.0px;color:#111;transform:scaleX(1.0988);transform-origin:0 0;-webkit-text-stroke:0.15px #111;">pour</div>
<div class="t" style="left:599.51px;top:257.60px;font-family:'Liberation Serif', serif;font-size:26.0px;color:#111;transform:scaleX(1.0901);transform-origin:0 0;-webkit-text-stroke:0.15px #111;">continuer</div>
<div class="t" style="left:713.83px;top:257.60px;font-family:'Liberation Serif', serif;font-size:26.0px;color:#111;transform:scaleX(1.0910);transform-origin:0 0;-webkit-text-stroke:0.15px #111;">à</div>
<div class="t" style="left:733.73px;top:257.60px;font-family:'Liberation Serif', serif;font-size:26.0px;color:#111;transform:scaleX(1.0874);transform-origin:0 0;-webkit-text-stroke:0.15px #111;">nous</div>
<div class="t" style="left:794.44px;top:257.60px;font-family:'Liberation Serif', serif;font-size:26.0px;color:#111;transform:scaleX(1.1282);transform-origin:0 0;-webkit-text-stroke:0.15px #111;">torturer</div>
<div class="t" style="left:889.69px;top:257.60px;font-family:'Liberation Serif', serif;font-size:26.0px;color:#111;transform:scaleX(1.0787);transform-origin:0 0;-webkit-text-stroke:0.15px #111;">puisque</div>
<div class="t" style="left:984.24px;top:257.60px;font-family:'Liberation Serif', serif;font-size:26.0px;color:#111;transform:scaleX(1.0407);transform-origin:0 0;-webkit-text-stroke:0.15px #111;">les</div>
<div class="t" style="left:1021.60px;top:257.60px;font-family:'Liberation Serif', serif;font-size:26.0px;color:#111;transform:scaleX(1.0244);transform-origin:0 0;-webkit-text-stroke:0.15px #111;">Dieux</div>
<div class="t" style="left:19.10px;top:285.60px;font-family:'Liberation Serif', serif;font-size:26.0px;color:#111;transform:scaleX(1.0567);transform-origin:0 0;-webkit-text-stroke:0.15px #111;">se</div>
<div class="t" style="left:48.42px;top:285.60px;font-family:'Liberation Serif', serif;font-size:26.0px;color:#111;transform:scaleX(1.1074);transform-origin:0 0;-webkit-text-stroke:0.15px #111;">plurent</div>
<div class="t" style="left:136.40px;top:285.60px;font-family:'Liberation Serif', serif;font-size:26.0px;color:#111;transform:scaleX(1.0910);transform-origin:0 0;-webkit-text-stroke:0.15px #111;">à</div>
<div class="t" style="left:155.41px;top:285.60px;font-family:'Liberation Serif', serif;font-size:26.0px;color:#111;transform:scaleX(1.0874);transform-origin:0 0;-webkit-text-stroke:0.15px #111;">nous</div>
<div class="t" style="left:215.24px;top:285.60px;font-family:'Liberation Serif', serif;font-size:26.0px;color:#111;transform:scaleX(1.0774);transform-origin:0 0;-webkit-text-stroke:0.15px #111;">imposer</div>
<div class="t" style="left:311.90px;top:285.60px;font-family:'Liberation Serif', serif;font-size:26.0px;color:#111;transform:scaleX(1.0771);transform-origin:0 0;-webkit-text-stroke:0.15px #111;">de</div>
<div class="t" style="left:344.76px;top:285.60px;font-family:'Liberation Serif', serif;font-size:26.0px;color:#111;transform:scaleX(1.0564);transform-origin:0 0;-webkit-text-stroke:0.15px #111;">telles</div>
<div class="t" style="left:409.14px;top:285.60px;font-family:'Liberation Serif', serif;font-size:26.0px;color:#111;transform:scaleX(1.0828);transform-origin:0 0;-webkit-text-stroke:0.15px #111;">incontournables</div>
<div class="t" style="left:595.38px;top:285.60px;font-family:'Liberation Serif', serif;font-size:26.0px;color:#111;transform:scaleX(1.1052);transform-origin:0 0;-webkit-text-stroke:0.15px #111;">et</div>
<div class="t" style="left:622.53px;top:285.60px;font-family:'Liberation Serif', serif;font-size:26.0px;color:#111;transform:scaleX(1.0662);transform-origin:0 0;-webkit-text-stroke:0.15px #111;">fastidieuses</div>
<div class="t" style="left:758.30px;top:285.60px;font-family:'Liberation Serif', serif;font-size:26.0px;color:#111;transform:scaleX(1.0524);transform-origin:0 0;-webkit-text-stroke:0.15px #111;">fêtes.</div>
<div class="t" style="left:823.22px;top:285.60px;font-family:'Liberation Serif', serif;font-size:26.0px;color:#111;transform:scaleX(1.1558);transform-origin:0 0;-webkit-text-stroke:0.15px #111;">Je</div>
<div class="t" style="left:854.68px;top:285.60px;font-family:'Liberation Serif', serif;font-size:26.0px;color:#111;transform:scaleX(1.0940);transform-origin:0 0;-webkit-text-stroke:0.15px #111;">ne</div>
<div class="t" style="left:887.95px;top:285.60px;font-family:'Liberation Serif', serif;font-size:26.0px;color:#111;transform:scaleX(1.0407);transform-origin:0 0;-webkit-text-stroke:0.15px #111;">les</div>
<div class="t" style="left:924.43px;top:285.60px;font-family:'Liberation Serif', serif;font-size:26.0px;color:#111;transform:scaleX(1.0608);transform-origin:0 0;-webkit-text-stroke:0.15px #111;">imagine</div>
<div class="t" style="left:1019.70px;top:285.60px;font-family:'Liberation Serif', serif;font-size:26.0px;color:#111;transform:scaleX(1.0868);transform-origin:0 0;-webkit-text-stroke:0.15px #111;">pas</div>
<div class="t" style="left:1063.80px;top:285.60px;font-family:'Liberation Serif', serif;font-size:26.0px;color:#111;transform:scaleX(1.0567);transform-origin:0 0;-webkit-text-stroke:0.15px #111;">se</div>
<div class="t" style="left:19.10px;top:313.60px;font-family:'Liberation Serif', serif;font-size:26.0px;color:#111;transform:scaleX(1.0899);transform-origin:0 0;-webkit-text-stroke:0.15px #111;">passer</div>
<div class="t" style="left:95.96px;top:313.60px;font-family:'Liberation Serif', serif;font-size:26.0px;color:#111;transform:scaleX(1.1047);transform-origin:0 0;-webkit-text-stroke:0.15px #111;">du</div>
<div class="t" style="left:130.71px;top:313.60px;font-family:'Liberation Serif', serif;font-size:26.0px;color:#111;transform:scaleX(1.0538);transform-origin:0 0;-webkit-text-stroke:0.15px #111;">spectacle</div>
<div class="t" style="left:237.13px;top:313.60px;font-family:'Liberation Serif', serif;font-size:26.0px;color:#111;transform:scaleX(1.0771);transform-origin:0 0;-webkit-text-stroke:0.15px #111;">de</div>
<div class="t" style="left:269.60px;top:313.60px;font-family:'Liberation Serif', serif;font-size:26.0px;color:#111;transform:scaleX(1.0806);transform-origin:0 0;-webkit-text-stroke:0.15px #111;">nos</div>
<div class="t" style="left:314.67px;top:313.60px;font-family:'Liberation Serif', serif;font-size:26.0px;color:#111;transform:scaleX(1.0700);transform-origin:0 0;-webkit-text-stroke:0.15px #111;">fourberies</div>
<div class="t" style="left:433.48px;top:313.60px;font-family:'Liberation Serif', serif;font-size:26.0px;color:#111;transform:scaleX(1.0910);transform-origin:0 0;-webkit-text-stroke:0.15px #111;">à</div>
<div class="t" style="left:452.11px;top:313.60px;font-family:'Liberation Serif', serif;font-size:26.0px;color:#111;transform:scaleX(1.0603);transform-origin:0 0;-webkit-text-stroke:0.15px #111;">cause</div>
<div class="t" style="left:519.37px;top:313.60px;font-family:'Liberation Serif', serif;font-size:26.0px;color:#111;transform:scaleX(1.0771);transform-origin:0 0;-webkit-text-stroke:0.15px #111;">de</div>
<div class="t" style="left:551.84px;top:313.60px;font-family:'Liberation Serif', serif;font-size:26.0px;color:#111;transform:scaleX(1.0806);transform-origin:0 0;-webkit-text-stroke:0.15px #111;">nos</div>
<div class="t" style="left:596.91px;top:313.60px;font-family:'Liberation Serif', serif;font-size:26.0px;color:#111;transform:scaleX(1.0400);transform-origin:0 0;-webkit-text-stroke:0.15px #111;">fragiles</div>
<div class="t" style="left:684.03px;top:313.60px;font-family:'Liberation Serif', serif;font-size:26.0px;color:#111;transform:scaleX(1.1052);transform-origin:0 0;-webkit-text-stroke:0.15px #111;">et</div>
<div class="t" style="left:710.80px;top:313.60px;font-family:'Liberation Serif', serif;font-size:26.0px;color:#111;transform:scaleX(1.0625);transform-origin:0 0;-webkit-text-stroke:0.15px #111;">limitées</div>
<div class="t" style="left:804.31px;top:313.60px;font-family:'Liberation Serif', serif;font-size:26.0px;color:#111;transform:scaleX(1.0731);transform-origin:0 0;-webkit-text-stroke:0.15px #111;">conditions</div>
<div class="t" style="left:926.60px;top:313.60px;font-family:'Liberation Serif', serif;font-size:26.0px;color:#111;transform:scaleX(1.0442);transform-origin:0 0;-webkit-text-stroke:0.15px #111;">biologiques.</div>
<div class="t" style="left:56.60px;top:341.60px;font-family:'Liberation Serif', serif;font-size:26.0px;color:#111;transform:scaleX(1.0286);transform-origin:0 0;-webkit-text-stroke:0.15px #111;">Bien</div>
<div class="t" style="left:114.49px;top:341.60px;font-family:'Liberation Serif', serif;font-size:26.0px;color:#111;transform:scaleX(1.1319);transform-origin:0 0;-webkit-text-stroke:0.15px #111;">sûr,</div>
<div class="t" style="left:164.03px;top:341.60px;font-family:'Liberation Serif', serif;font-size:26.0px;color:#111;transform:scaleX(1.0710);transform-origin:0 0;-webkit-text-stroke:0.15px #111;">passée</div>
<div class="t" style="left:244.09px;top:341.60px;font-family:'Liberation Serif', serif;font-size:26.0px;color:#111;transform:scaleX(1.0601);transform-origin:0 0;-webkit-text-stroke:0.15px #111;">l’appréhension</div>
<div class="t" style="left:415.28px;top:341.60px;font-family:'Liberation Serif', serif;font-size:26.0px;color:#111;transform:scaleX(1.0771);transform-origin:0 0;-webkit-text-stroke:0.15px #111;">de</div>
<div class="t" style="left:449.10px;top:341.60px;font-family:'Liberation Serif', serif;font-size:26.0px;color:#111;transform:scaleX(1.0806);transform-origin:0 0;-webkit-text-stroke:0.15px #111;">nos</div>
<div class="t" style="left:495.52px;top:341.60px;font-family:'Liberation Serif', serif;font-size:26.0px;color:#111;transform:scaleX(1.0452);transform-origin:0 0;-webkit-text-stroke:0.15px #111;">si</div>
<div class="t" style="left:521.02px;top:341.60px;font-family:'Liberation Serif', serif;font-size:26.0px;color:#111;transform:scaleX(1.0859);transform-origin:0 0;-webkit-text-stroke:0.15px #111;">redoutées</div>
<div class="t" style="left:636.58px;top:341.60px;font-family:'Liberation Serif', serif;font-size:26.0px;color:#111;transform:scaleX(1.0656);transform-origin:0 0;-webkit-text-stroke:0.15px #111;">retrouvailles,</div>
<div class="t" style="left:789.37px;top:341.60px;font-family:'Liberation Serif', serif;font-size:26.0px;color:#111;transform:scaleX(1.0532);transform-origin:0 0;-webkit-text-stroke:0.15px #111;">la</div>
<div class="t" style="left:816.51px;top:341.60px;font-family:'Liberation Serif', serif;font-size:26.0px;color:#111;transform:scaleX(1.0304);transform-origin:0 0;-webkit-text-stroke:0.15px #111;">joie</div>
<div class="t" style="left:864.08px;top:341.60px;font-family:'Liberation Serif', serif;font-size:26.0px;color:#111;transform:scaleX(1.0619);transform-origin:0 0;-webkit-text-stroke:0.15px #111;">m’étreint</div>
<div class="t" style="left:972.66px;top:341.60px;font-family:'Liberation Serif', serif;font-size:26.0px;color:#111;transform:scaleX(1.1207);transform-origin:0 0;-webkit-text-stroke:0.15px #111;">un</div>
<div class="t" style="left:1009.17px;top:341.60px;font-family:'Liberation Serif', serif;font-size:26.0px;color:#111;transform:scaleX(1.1180);transform-origin:0 0;-webkit-text-stroke:0.15px #111;">instant</div>
<div class="t" style="left:19.10px;top:369.60px;font-family:'Liberation Serif', serif;font-size:26.0px;color:#111;transform:scaleX(1.0732);transform-origin:0 0;-webkit-text-stroke:0.15px #111;">lorsque</div>
<div class="t" style="left:107.88px;top:369.60px;font-family:'Liberation Serif', serif;font-size:26.0px;color:#111;transform:scaleX(1.0330);transform-origin:0 0;-webkit-text-stroke:0.15px #111;">je</div>
<div class="t" style="left:133.90px;top:369.60px;font-family:'Liberation Serif', serif;font-size:26.0px;color:#111;transform:scaleX(1.0446);transform-origin:0 0;-webkit-text-stroke:0.15px #111;">revois</div>
<div class="t" style="left:206.91px;top:369.60px;font-family:'Liberation Serif', serif;font-size:26.0px;color:#111;transform:scaleX(1.0724);transform-origin:0 0;-webkit-text-stroke:0.15px #111;">mes</div>
<div class="t" style="left:258.46px;top:369.60px;font-family:'Liberation Serif', serif;font-size:26.0px;color:#111;transform:scaleX(1.1109);transform-origin:0 0;-webkit-text-stroke:0.15px #111;">parents</div>
<div class="t" style="left:348.51px;top:369.60px;font-family:'Liberation Serif', serif;font-size:26.0px;color:#111;transform:scaleX(1.0714);transform-origin:0 0;-webkit-text-stroke:0.15px #111;">ou</div>
<div class="t" style="left:383.00px;top:369.60px;font-family:'Liberation Serif', serif;font-size:26.0px;color:#111;transform:scaleX(1.0870);transform-origin:0 0;-webkit-text-stroke:0.15px #111;">mon</div>
<div class="t" style="left:439.89px;top:369.60px;font-family:'Liberation Serif', serif;font-size:26.0px;color:#111;transform:scaleX(1.0763);transform-origin:0 0;-webkit-text-stroke:0.15px #111;">frère</div>
<div class="t" style="left:499.32px;top:369.60px;font-family:'Liberation Serif', serif;font-size:26.0px;color:#111;transform:scaleX(1.0767);transform-origin:0 0;-webkit-text-stroke:0.15px #111;">descendu</div>
<div class="t" style="left:610.13px;top:369.60px;font-family:'Liberation Serif', serif;font-size:26.0px;color:#111;transform:scaleX(1.0771);transform-origin:0 0;-webkit-text-stroke:0.15px #111;">de</div>
<div class="t" style="left:643.20px;top:369.60px;font-family:'Liberation Serif', serif;font-size:26.0px;color:#111;transform:scaleX(1.0810);transform-origin:0 0;-webkit-text-stroke:0.15px #111;">Paris</div>
<div class="t" style="left:706.04px;top:369.60px;font-family:'Liberation Serif', serif;font-size:26.0px;color:#111;transform:scaleX(1.0181);transform-origin:0 0;-webkit-text-stroke:0.15px #111;">avec</div>
<div class="t" style="left:761.16px;top:369.60px;font-family:'Liberation Serif', serif;font-size:26.0px;color:#111;transform:scaleX(1.0806);transform-origin:0 0;-webkit-text-stroke:0.15px #111;">son</div>
<div class="t" style="left:806.82px;top:369.60px;font-family:'Liberation Serif', serif;font-size:26.0px;color:#111;transform:scaleX(1.0683);transform-origin:0 0;-webkit-text-stroke:0.15px #111;">épouse</div>
<div class="t" style="left:890.59px;top:369.60px;font-family:'Liberation Serif', serif;font-size:26.0px;color:#111;transform:scaleX(1.0618);transform-origin:0 0;-webkit-text-stroke:0.15px #111;">Valérie</div>
<div class="t" style="left:975.39px;top:369.60px;font-family:'Liberation Serif', serif;font-size:26.0px;color:#111;transform:scaleX(1.1052);transform-origin:0 0;-webkit-text-stroke:0.15px #111;">et</div>
<div class="t" style="left:1002.76px;top:369.60px;font-family:'Liberation Serif', serif;font-size:26.0px;color:#111;transform:scaleX(1.0857);transform-origin:0 0;-webkit-text-stroke:0.15px #111;">leur</div>
<div class="t" style="left:1053.28px;top:369.60px;font-family:'Liberation Serif', serif;font-size:26.0px;color:#111;transform:scaleX(1.0057);transform-origin:0 0;-webkit-text-stroke:0.15px #111;">fils</div>
<div class="t" style="left:19.10px;top:400.60px;font-family:'Liberation Serif', serif;font-size:26.0px;color:#111;transform:scaleX(1.0343);transform-origin:0 0;-webkit-text-stroke:0.15px #111;">Lucas,</div>
<div class="t" style="left:96.08px;top:400.60px;font-family:'Liberation Serif', serif;font-size:26.0px;color:#111;transform:scaleX(1.0265);transform-origin:0 0;-webkit-text-stroke:0.15px #111;">le</div>
<div class="t" style="left:121.37px;top:400.60px;font-family:'Liberation Serif', serif;font-size:26.0px;color:#111;transform:scaleX(1.0610);transform-origin:0 0;-webkit-text-stroke:0.15px #111;">seul</div>
<div class="t" style="left:171.85px;top:400.60px;font-family:'Liberation Serif', serif;font-size:26.0px;color:#111;transform:scaleX(1.0740);transform-origin:0 0;-webkit-text-stroke:0.15px #111;">qui</div>
<div class="t" style="left:213.57px;top:400.60px;font-family:'Liberation Serif', serif;font-size:26.0px;color:#111;transform:scaleX(1.0489);transform-origin:0 0;-webkit-text-stroke:0.15px #111;">m’épargne.</div>
<div class="t" style="left:342.54px;top:400.60px;font-family:'Liberation Serif', serif;font-size:26.0px;color:#111;transform:scaleX(1.1558);transform-origin:0 0;-webkit-text-stroke:0.15px #111;">Je</div>
<div class="t" style="left:373.62px;top:400.60px;font-family:'Liberation Serif', serif;font-size:26.0px;color:#111;transform:scaleX(1.0741);transform-origin:0 0;-webkit-text-stroke:0.15px #111;">me</div>
<div class="t" style="left:413.77px;top:400.60px;font-family:'Liberation Serif', serif;font-size:26.0px;color:#111;transform:scaleX(1.0624);transform-origin:0 0;-webkit-text-stroke:0.15px #111;">plais</div>
<div class="t" style="left:471.97px;top:400.60px;font-family:'Liberation Serif', serif;font-size:26.0px;color:#111;transform:scaleX(1.0910);transform-origin:0 0;-webkit-text-stroke:0.15px #111;">à</div>
<div class="t" style="left:490.60px;top:400.60px;font-family:'Liberation Serif', serif;font-size:26.0px;color:#111;transform:scaleX(1.0906);transform-origin:0 0;-webkit-text-stroke:0.15px #111;">espérer</div>
<div class="t" style="left:578.49px;top:400.60px;font-family:'Liberation Serif', serif;font-size:26.0px;color:#111;transform:scaleX(1.1207);transform-origin:0 0;-webkit-text-stroke:0.15px #111;">un</div>
<div class="t" style="left:613.66px;top:400.60px;font-family:'Liberation Serif', serif;font-size:26.0px;color:#111;transform:scaleX(1.0856);transform-origin:0 0;-webkit-text-stroke:0.15px #111;">peu</div>
<div class="t" style="left:660.45px;top:400.60px;font-family:'Liberation Serif', serif;font-size:26.0px;color:#111;transform:scaleX(1.0647);transform-origin:0 0;-webkit-text-stroke:0.15px #111;">d’humanité</div>
<div class="t" style="left:792.56px;top:400.60px;font-family:'Liberation Serif', serif;font-size:26.0px;color:#111;transform:scaleX(1.0771);transform-origin:0 0;-webkit-text-stroke:0.15px #111;">de</div>
<div class="t" style="left:825.03px;top:400.60px;font-family:'Liberation Serif', serif;font-size:26.0px;color:#111;transform:scaleX(1.0857);transform-origin:0 0;-webkit-text-stroke:0.15px #111;">leur</div>
<div class="t" style="left:874.95px;top:400.60px;font-family:'Liberation Serif', serif;font-size:26.0px;color:#111;transform:scaleX(1.1189);transform-origin:0 0;-webkit-text-stroke:0.15px #111;">part.</div>
<div class="t" style="left:56.60px;top:428.60px;font-family:'Liberation Serif', serif;font-size:26.0px;color:#111;transform:scaleX(1.0364);transform-origin:0 0;-webkit-text-stroke:0.15px #111;">Mais</div>
<div class="t" style="left:117.73px;top:428.60px;font-family:'Liberation Serif', serif;font-size:26.0px;color:#111;transform:scaleX(1.0947);transform-origin:0 0;-webkit-text-stroke:0.15px #111;">rapidement,</div>
<div class="t" style="left:260.11px;top:428.60px;font-family:'Liberation Serif', serif;font-size:26.0px;color:#111;transform:scaleX(1.0407);transform-origin:0 0;-webkit-text-stroke:0.15px #111;">les</div>
<div class="t" style="left:297.41px;top:428.60px;font-family:'Liberation Serif', serif;font-size:26.0px;color:#111;transform:scaleX(1.0734);transform-origin:0 0;-webkit-text-stroke:0.15px #111;">piques</div>
<div class="t" style="left:377.52px;top:428.60px;font-family:'Liberation Serif', serif;font-size:26.0px;color:#111;transform:scaleX(1.0754);transform-origin:0 0;-webkit-text-stroke:0.15px #111;">assassines</div>
<div class="t" style="left:498.14px;top:428.60px;font-family:'Liberation Serif', serif;font-size:26.0px;color:#111;transform:scaleX(1.0864);transform-origin:0 0;-webkit-text-stroke:0.15px #111;">reviennent</div>
<div class="t" style="left:624.59px;top:428.60px;font-family:'Liberation Serif', serif;font-size:26.0px;color:#111;transform:scaleX(1.0695);transform-origin:0 0;-webkit-text-stroke:0.15px #111;">sous</div>
<div class="t" style="left:681.29px;top:428.60px;font-family:'Liberation Serif', serif;font-size:26.0px;color:#111;transform:scaleX(1.0265);transform-origin:0 0;-webkit-text-stroke:0.15px #111;">le</div>
<div class="t" style="left:707.79px;top:428.60px;font-family:'Liberation Serif', serif;font-size:26.0px;color:#111;transform:scaleX(1.0598);transform-origin:0 0;-webkit-text-stroke:0.15px #111;">couvert</div>
<div class="t" style="left:797.65px;top:428.60px;font-family:'Liberation Serif', serif;font-size:26.0px;color:#111;transform:scaleX(1.0771);transform-origin:0 0;-webkit-text-stroke:0.15px #111;">de</div>
<div class="t" style="left:831.33px;top:428.60px;font-family:'Liberation Serif', serif;font-size:26.0px;color:#111;transform:scaleX(1.0532);transform-origin:0 0;-webkit-text-stroke:0.15px #111;">la</div>
<div class="t" style="left:858.32px;top:428.60px;font-family:'Liberation Serif', serif;font-size:26.0px;color:#111;transform:scaleX(1.0817);transform-origin:0 0;-webkit-text-stroke:0.15px #111;">plaisanterie.</div>
<div class="t" style="left:1002.23px;top:428.60px;font-family:'Liberation Serif', serif;font-size:26.0px;color:#111;transform:scaleX(1.0634);transform-origin:0 0;-webkit-text-stroke:0.15px #111;">Jusqu’à</div>
<div class="t" style="left:19.10px;top:456.60px;font-family:'Liberation Serif', serif;font-size:26.0px;color:#111;transform:scaleX(1.0316);transform-origin:0 0;-webkit-text-stroke:0.15px #111;">m’inciser</div>
<div class="t" style="left:131.76px;top:456.60px;font-family:'Liberation Serif', serif;font-size:26.0px;color:#111;transform:scaleX(1.0934);transform-origin:0 0;-webkit-text-stroke:0.15px #111;">sans</div>
<div class="t" style="left:192.10px;top:456.60px;font-family:'Liberation Serif', serif;font-size:26.0px;color:#111;transform:scaleX(1.0968);transform-origin:0 0;-webkit-text-stroke:0.15px #111;">retenue,</div>
<div class="t" style="left:294.52px;top:456.60px;font-family:'Liberation Serif', serif;font-size:26.0px;color:#111;transform:scaleX(1.0835);transform-origin:0 0;-webkit-text-stroke:0.15px #111;">juste</div>
<div class="t" style="left:359.10px;top:456.60px;font-family:'Liberation Serif', serif;font-size:26.0px;color:#111;transform:scaleX(1.0460);transform-origin:0 0;-webkit-text-stroke:0.15px #111;">assez</div>
<div class="t" style="left:427.86px;top:456.60px;font-family:'Liberation Serif', serif;font-size:26.0px;color:#111;transform:scaleX(1.0988);transform-origin:0 0;-webkit-text-stroke:0.15px #111;">pour</div>
<div class="t" style="left:491.61px;top:456.60px;font-family:'Liberation Serif', serif;font-size:26.0px;color:#111;transform:scaleX(1.0741);transform-origin:0 0;-webkit-text-stroke:0.15px #111;">me</div>
<div class="t" style="left:537.10px;top:456.60px;font-family:'Liberation Serif', serif;font-size:26.0px;color:#111;transform:scaleX(1.0694);transform-origin:0 0;-webkit-text-stroke:0.15px #111;">laisser</div>
<div class="t" style="left:619.50px;top:456.60px;font-family:'Liberation Serif', serif;font-size:26.0px;color:#111;transform:scaleX(1.1207);transform-origin:0 0;-webkit-text-stroke:0.15px #111;">un</div>
<div class="t" style="left:660.01px;top:456.60px;font-family:'Liberation Serif', serif;font-size:26.0px;color:#111;transform:scaleX(1.0341);transform-origin:0 0;-webkit-text-stroke:0.15px #111;">souffle</div>
<div class="t" style="left:745.56px;top:456.60px;font-family:'Liberation Serif', serif;font-size:26.0px;color:#111;transform:scaleX(1.0771);transform-origin:0 0;-webkit-text-stroke:0.15px #111;">de</div>
<div class="t" style="left:783.37px;top:456.60px;font-family:'Liberation Serif', serif;font-size:26.0px;color:#111;transform:scaleX(1.0030);transform-origin:0 0;-webkit-text-stroke:0.15px #111;">vie</div>
<div class="t" style="left:826.60px;top:456.60px;font-family:'Liberation Serif', serif;font-size:26.0px;color:#111;transform:scaleX(1.1052);transform-origin:0 0;-webkit-text-stroke:0.15px #111;">et</div>
<div class="t" style="left:858.71px;top:456.60px;font-family:'Liberation Serif', serif;font-size:26.0px;color:#111;transform:scaleX(1.0585);transform-origin:0 0;-webkit-text-stroke:0.15px #111;">pouvoir</div>
<div class="t" style="left:955.70px;top:456.60px;font-family:'Liberation Serif', serif;font-size:26.0px;color:#111;transform:scaleX(1.0901);transform-origin:0 0;-webkit-text-stroke:0.15px #111;">continuer</div>
<div class="t" style="left:1074.10px;top:456.60px;font-family:'Liberation Serif', serif;font-size:26.0px;color:#111;transform:scaleX(1.0910);transform-origin:0 0;-webkit-text-stroke:0.15px #111;">à</div>
<div class="t" style="left:19.10px;top:484.60px;font-family:'Liberation Serif', serif;font-size:26.0px;color:#111;transform:scaleX(1.0475);transform-origin:0 0;-webkit-text-stroke:0.15px #111;">s’amuser</div>
<div class="t" style="left:123.45px;top:484.60px;font-family:'Liberation Serif', serif;font-size:26.0px;color:#111;transform:scaleX(1.0771);transform-origin:0 0;-webkit-text-stroke:0.15px #111;">de</div>
<div class="t" style="left:155.92px;top:484.60px;font-family:'Liberation Serif', serif;font-size:26.0px;color:#111;transform:scaleX(1.0555);transform-origin:0 0;-webkit-text-stroke:0.15px #111;">moi.</div>
<div class="t" style="left:56.60px;top:512.60px;font-family:'Liberation Serif', serif;font-size:26.0px;color:#111;transform:scaleX(1.1558);transform-origin:0 0;-webkit-text-stroke:0.15px #111;">Je</div>
<div class="t" style="left:88.33px;top:512.60px;font-family:'Liberation Serif', serif;font-size:26.0px;color:#111;transform:scaleX(1.0648);transform-origin:0 0;-webkit-text-stroke:0.15px #111;">sais</div>
<div class="t" style="left:136.54px;top:512.60px;font-family:'Liberation Serif', serif;font-size:26.0px;color:#111;transform:scaleX(1.0778);transform-origin:0 0;-webkit-text-stroke:0.15px #111;">que</div>
<div class="t" style="left:183.68px;top:512.60px;font-family:'Liberation Serif', serif;font-size:26.0px;color:#111;transform:scaleX(1.1159);transform-origin:0 0;-webkit-text-stroke:0.15px #111;">tout</div>
<div class="t" style="left:235.51px;top:512.60px;font-family:'Liberation Serif', serif;font-size:26.0px;color:#111;transform:scaleX(0.9465);transform-origin:0 0;-webkit-text-stroke:0.15px #111;">y</div>
<div class="t" style="left:254.49px;top:512.60px;font-family:'Liberation Serif', serif;font-size:26.0px;color:#111;transform:scaleX(1.0903);transform-origin:0 0;-webkit-text-stroke:0.15px #111;">passera</div>
<div class="t" style="left:344.59px;top:512.60px;font-family:'Liberation Serif', serif;font-size:26.0px;color:#111;transform:scaleX(1.0580);transform-origin:0 0;-webkit-text-stroke:0.15px #111;">comme</div>
<div class="t" style="left:432.24px;top:512.60px;font-family:'Liberation Serif', serif;font-size:26.0px;color:#111;transform:scaleX(1.1286);transform-origin:0 0;-webkit-text-stroke:0.15px #111;">durant</div>
<div class="t" style="left:513.89px;top:512.60px;font-family:'Liberation Serif', serif;font-size:26.0px;color:#111;transform:scaleX(1.0695);transform-origin:0 0;-webkit-text-stroke:0.15px #111;">chacune</div>
<div class="t" style="left:611.66px;top:512.60px;font-family:'Liberation Serif', serif;font-size:26.0px;color:#111;transform:scaleX(1.0771);transform-origin:0 0;-webkit-text-stroke:0.15px #111;">de</div>
<div class="t" style="left:644.78px;top:512.60px;font-family:'Liberation Serif', serif;font-size:26.0px;color:#111;transform:scaleX(1.0806);transform-origin:0 0;-webkit-text-stroke:0.15px #111;">nos</div>
<div class="t" style="left:690.50px;top:512.60px;font-family:'Liberation Serif', serif;font-size:26.0px;color:#111;transform:scaleX(1.0926);transform-origin:0 0;-webkit-text-stroke:0.15px #111;">réunions</div>
<div class="t" style="left:795.02px;top:512.60px;font-family:'Liberation Serif', serif;font-size:26.0px;color:#111;transform:scaleX(1.0460);transform-origin:0 0;-webkit-text-stroke:0.15px #111;">familiales</div>
<div class="t" style="left:908.92px;top:512.60px;font-family:'Liberation Serif', serif;font-size:26.0px;color:#111;transform:scaleX(1.0778);transform-origin:0 0;-webkit-text-stroke:0.15px #111;">annuelles</div>
<div class="t" style="left:1021.43px;top:512.60px;font-family:'Liberation Serif', serif;font-size:26.0px;color:#111;transform:scaleX(1.0740);transform-origin:0 0;-webkit-text-stroke:0.15px #111;">qui</div>
<div class="t" style="left:1063.80px;top:512.60px;font-family:'Liberation Serif', serif;font-size:26.0px;color:#111;transform:scaleX(1.0567);transform-origin:0 0;-webkit-text-stroke:0.15px #111;">se</div>
<div class="t" style="left:19.10px;top:540.60px;font-family:'Liberation Serif', serif;font-size:26.0px;color:#111;transform:scaleX(1.0713);transform-origin:0 0;-webkit-text-stroke:0.15px #111;">succèdent</div>
<div class="t" style="left:137.09px;top:540.60px;font-family:'Liberation Serif', serif;font-size:26.0px;color:#111;transform:scaleX(1.1013);transform-origin:0 0;-webkit-text-stroke:0.15px #111;">dans</div>
<div class="t" style="left:197.75px;top:540.60px;font-family:'Liberation Serif', serif;font-size:26.0px;color:#111;transform:scaleX(1.1207);transform-origin:0 0;-webkit-text-stroke:0.15px #111;">un</div>
<div class="t" style="left:235.05px;top:540.60px;font-family:'Liberation Serif', serif;font-size:26.0px;color:#111;transform:scaleX(1.0842);transform-origin:0 0;-webkit-text-stroke:0.15px #111;">rythme</div>
<div class="t" style="left:323.07px;top:540.60px;font-family:'Liberation Serif', serif;font-size:26.0px;color:#111;transform:scaleX(1.0760);transform-origin:0 0;-webkit-text-stroke:0.15px #111;">bien</div>
<div class="t" style="left:379.40px;top:540.60px;font-family:'Liberation Serif', serif;font-size:26.0px;color:#111;transform:scaleX(1.1134);transform-origin:0 0;-webkit-text-stroke:0.15px #111;">trop</div>
<div class="t" style="left:434.21px;top:540.60px;font-family:'Liberation Serif', serif;font-size:26.0px;color:#111;transform:scaleX(1.0605);transform-origin:0 0;-webkit-text-stroke:0.15px #111;">effréné</div>
<div class="t" style="left:519.92px;top:540.60px;font-family:'Liberation Serif', serif;font-size:26.0px;color:#111;transform:scaleX(1.0988);transform-origin:0 0;-webkit-text-stroke:0.15px #111;">pour</div>
<div class="t" style="left:580.46px;top:540.60px;font-family:'Liberation Serif', serif;font-size:26.0px;color:#111;transform:scaleX(1.0586);transform-origin:0 0;-webkit-text-stroke:0.15px #111;">moi</div>
<div class="t" style="left:631.45px;top:540.60px;font-family:'Liberation Serif', serif;font-size:26.0px;color:#111;transform:scaleX(1.0990);transform-origin:0 0;-webkit-text-stroke:0.15px #111;">au</div>
<div class="t" style="left:666.59px;top:540.60px;font-family:'Liberation Serif', serif;font-size:26.0px;color:#111;transform:scaleX(0.9788);transform-origin:0 0;-webkit-text-stroke:0.15px #111;">fil</div>
<div class="t" style="left:697.37px;top:540.60px;font-family:'Liberation Serif', serif;font-size:26.0px;color:#111;transform:scaleX(1.0742);transform-origin:0 0;-webkit-text-stroke:0.15px #111;">des</div>
<div class="t" style="left:742.77px;top:540.60px;font-family:'Liberation Serif', serif;font-size:26.0px;color:#111;transform:scaleX(1.0724);transform-origin:0 0;-webkit-text-stroke:0.15px #111;">saisons</div>
<div class="t" style="left:831.50px;top:540.60px;font-family:'Liberation Serif', serif;font-size:26.0px;color:#111;transform:scaleX(1.0760);transform-origin:0 0;-webkit-text-stroke:0.15px #111;">bien</div>
<div class="t" style="left:887.83px;top:540.60px;font-family:'Liberation Serif', serif;font-size:26.0px;color:#111;transform:scaleX(1.1134);transform-origin:0 0;-webkit-text-stroke:0.15px #111;">trop</div>
<div class="t" style="left:942.64px;top:540.60px;font-family:'Liberation Serif', serif;font-size:26.0px;color:#111;transform:scaleX(1.0752);transform-origin:0 0;-webkit-text-stroke:0.15px #111;">courtes,</div>
<div class="t" style="left:1038.53px;top:540.60px;font-family:'Liberation Serif', serif;font-size:26.0px;color:#111;transform:scaleX(1.0760);transform-origin:0 0;-webkit-text-stroke:0.15px #111;">bien</div>
<div class="t" style="left:19.10px;top:568.60px;font-family:'Liberation Serif', serif;font-size:26.0px;color:#111;transform:scaleX(1.0786);transform-origin:0 0;-webkit-text-stroke:0.15px #111;">au-delà</div>
<div class="t" style="left:110.90px;top:568.60px;font-family:'Liberation Serif', serif;font-size:26.0px;color:#111;transform:scaleX(1.0771);transform-origin:0 0;-webkit-text-stroke:0.15px #111;">de</div>
<div class="t" style="left:146.61px;top:568.60px;font-family:'Liberation Serif', serif;font-size:26.0px;color:#111;transform:scaleX(1.0898);transform-origin:0 0;-webkit-text-stroke:0.15px #111;">ma</div>
<div class="t" style="left:190.49px;top:568.60px;font-family:'Liberation Serif', serif;font-size:26.0px;color:#111;transform:scaleX(1.0800);transform-origin:0 0;-webkit-text-stroke:0.15px #111;">résistance</div>
<div class="t" style="left:310.48px;top:568.60px;font-family:'Liberation Serif', serif;font-size:26.0px;color:#111;transform:scaleX(1.0414);transform-origin:0 0;-webkit-text-stroke:0.15px #111;">psychologique</div>
<div class="t" style="left:477.68px;top:568.60px;font-family:'Liberation Serif', serif;font-size:26.0px;color:#111;transform:scaleX(1.0716);transform-origin:0 0;-webkit-text-stroke:0.15px #111;">profonde.</div>
<div class="t" style="left:594.49px;top:568.60px;font-family:'Liberation Serif', serif;font-size:26.0px;color:#111;transform:scaleX(1.1558);transform-origin:0 0;-webkit-text-stroke:0.15px #111;">Je</div>
<div class="t" style="left:628.81px;top:568.60px;font-family:'Liberation Serif', serif;font-size:26.0px;color:#111;transform:scaleX(1.0741);transform-origin:0 0;-webkit-text-stroke:0.15px #111;">me</div>
<div class="t" style="left:672.20px;top:568.60px;font-family:'Liberation Serif', serif;font-size:26.0px;color:#111;transform:scaleX(1.0822);transform-origin:0 0;-webkit-text-stroke:0.15px #111;">sens</div>
<div class="t" style="left:729.93px;top:568.60px;font-family:'Liberation Serif', serif;font-size:26.0px;color:#111;transform:scaleX(1.0820);transform-origin:0 0;-webkit-text-stroke:0.15px #111;">tellement</div>
<div class="t" style="left:843.88px;top:568.60px;font-family:'Liberation Serif', serif;font-size:26.0px;color:#111;transform:scaleX(1.0687);transform-origin:0 0;-webkit-text-stroke:0.15px #111;">épuisé</div>
<div class="t" style="left:924.13px;top:568.60px;font-family:'Liberation Serif', serif;font-size:26.0px;color:#111;transform:scaleX(1.0910);transform-origin:0 0;-webkit-text-stroke:0.15px #111;">à</div>
<div class="t" style="left:946.00px;top:568.60px;font-family:'Liberation Serif', serif;font-size:26.0px;color:#111;transform:scaleX(1.0532);transform-origin:0 0;-webkit-text-stroke:0.15px #111;">la</div>
<div class="t" style="left:975.03px;top:568.60px;font-family:'Liberation Serif', serif;font-size:26.0px;color:#111;transform:scaleX(1.0584);transform-origin:0 0;-webkit-text-stroke:0.15px #111;">seule</div>
<div class="t" style="left:1040.84px;top:568.60px;font-family:'Liberation Serif', serif;font-size:26.0px;color:#111;transform:scaleX(1.0589);transform-origin:0 0;-webkit-text-stroke:0.15px #111;">idée</div>
<div class="t" style="left:19.10px;top:596.60px;font-family:'Liberation Serif', serif;font-size:26.0px;color:#111;transform:scaleX(1.0674);transform-origin:0 0;-webkit-text-stroke:0.15px #111;">d’endurer</div>
<div class="t" style="left:134.42px;top:596.60px;font-family:'Liberation Serif', serif;font-size:26.0px;color:#111;transform:scaleX(1.0407);transform-origin:0 0;-webkit-text-stroke:0.15px #111;">les</div>
<div class="t" style="left:171.94px;top:596.60px;font-family:'Liberation Serif', serif;font-size:26.0px;color:#111;transform:scaleX(1.0592);transform-origin:0 0;-webkit-text-stroke:0.15px #111;">supplices</div>
<div class="t" style="left:281.87px;top:596.60px;font-family:'Liberation Serif', serif;font-size:26.0px;color:#111;transform:scaleX(1.0742);transform-origin:0 0;-webkit-text-stroke:0.15px #111;">des</div>
<div class="t" style="left:326.56px;top:596.60px;font-family:'Liberation Serif', serif;font-size:26.0px;color:#111;transform:scaleX(1.0788);transform-origin:0 0;-webkit-text-stroke:0.15px #111;">miens</div>
<div class="t" style="left:401.02px;top:596.60px;font-family:'Liberation Serif', serif;font-size:26.0px;color:#111;transform:scaleX(1.1286);transform-origin:0 0;-webkit-text-stroke:0.15px #111;">durant</div>
<div class="t" style="left:483.43px;top:596.60px;font-family:'Liberation Serif', serif;font-size:26.0px;color:#111;transform:scaleX(1.0407);transform-origin:0 0;-webkit-text-stroke:0.15px #111;">les</div>
<div class="t" style="left:520.94px;top:596.60px;font-family:'Liberation Serif', serif;font-size:26.0px;color:#111;transform:scaleX(1.0930);transform-origin:0 0;-webkit-text-stroke:0.15px #111;">heures</div>
<div class="t" style="left:602.56px;top:596.60px;font-family:'Liberation Serif', serif;font-size:26.0px;color:#111;transform:scaleX(1.0740);transform-origin:0 0;-webkit-text-stroke:0.15px #111;">qui</div>
<div class="t" style="left:645.70px;top:596.60px;font-family:'Liberation Serif', serif;font-size:26.0px;color:#111;transform:scaleX(1.0710);transform-origin:0 0;-webkit-text-stroke:0.15px #111;">suivent</div>
<div class="t" style="left:733.59px;top:596.60px;font-family:'Liberation Serif', serif;font-size:26.0px;color:#111;transform:scaleX(1.1052);transform-origin:0 0;-webkit-text-stroke:0.15px #111;">et</div>
<div class="t" style="left:761.78px;top:596.60px;font-family:'Liberation Serif', serif;font-size:26.0px;color:#111;transform:scaleX(1.0567);transform-origin:0 0;-webkit-text-stroke:0.15px #111;">se</div>
<div class="t" style="left:792.13px;top:596.60px;font-family:'Liberation Serif', serif;font-size:26.0px;color:#111;transform:scaleX(1.0822);transform-origin:0 0;-webkit-text-stroke:0.15px #111;">prolongeront</div>
<div class="t" style="left:944.93px;top:596.60px;font-family:'Liberation Serif', serif;font-size:26.0px;color:#111;transform:scaleX(1.0181);transform-origin:0 0;-webkit-text-stroke:0.15px #111;">avec</div>
<div class="t" style="left:1000.86px;top:596.60px;font-family:'Liberation Serif', serif;font-size:26.0px;color:#111;transform:scaleX(1.0618);transform-origin:0 0;-webkit-text-stroke:0.15px #111;">perfidie</div>
<div class="t" style="left:19.10px;top:624.60px;font-family:'Liberation Serif', serif;font-size:26.0px;color:#111;transform:scaleX(1.0295);transform-origin:0 0;-webkit-text-stroke:0.15px #111;">jusqu’à</div>
<div class="t" style="left:103.94px;top:624.60px;font-family:'Liberation Serif', serif;font-size:26.0px;color:#111;transform:scaleX(1.0788);transform-origin:0 0;-webkit-text-stroke:0.15px #111;">dimanche</div>
<div class="t" style="left:219.01px;top:624.60px;font-family:'Liberation Serif', serif;font-size:26.0px;color:#111;transform:scaleX(1.1022);transform-origin:0 0;-webkit-text-stroke:0.15px #111;">soir.</div>
<div class="t" style="left:56.60px;top:652.60px;font-family:'Liberation Serif', serif;font-size:26.0px;color:#111;transform:scaleX(1.0446);transform-origin:0 0;-webkit-text-stroke:0.15px #111;">Même</div>
<div class="t" style="left:136.69px;top:652.60px;font-family:'Liberation Serif', serif;font-size:26.0px;color:#111;transform:scaleX(1.0452);transform-origin:0 0;-webkit-text-stroke:0.15px #111;">si</div>
<div class="t" style="left:165.52px;top:652.60px;font-family:'Liberation Serif', serif;font-size:26.0px;color:#111;transform:scaleX(1.0478);transform-origin:0 0;-webkit-text-stroke:0.15px #111;">l’habitude</div>
<div class="t" style="left:286.69px;top:652.60px;font-family:'Liberation Serif', serif;font-size:26.0px;color:#111;transform:scaleX(1.1052);transform-origin:0 0;-webkit-text-stroke:0.15px #111;">et</div>
<div class="t" style="left:318.13px;top:652.60px;font-family:'Liberation Serif', serif;font-size:26.0px;color:#111;transform:scaleX(1.0532);transform-origin:0 0;-webkit-text-stroke:0.15px #111;">la</div>
<div class="t" style="left:348.60px;top:652.60px;font-family:'Liberation Serif', serif;font-size:26.0px;color:#111;transform:scaleX(1.0798);transform-origin:0 0;-webkit-text-stroke:0.15px #111;">résignation</div>
<div class="t" style="left:484.06px;top:652.60px;font-family:'Liberation Serif', serif;font-size:26.0px;color:#111;transform:scaleX(1.0741);transform-origin:0 0;-webkit-text-stroke:0.15px #111;">finissent</div>
<div class="t" style="left:589.41px;top:652.60px;font-family:'Liberation Serif', serif;font-size:26.0px;color:#111;transform:scaleX(1.1180);transform-origin:0 0;-webkit-text-stroke:0.15px #111;">par</div>
<div class="t" style="left:637.24px;top:652.60px;font-family:'Liberation Serif', serif;font-size:26.0px;color:#111;transform:scaleX(1.0741);transform-origin:0 0;-webkit-text-stroke:0.15px #111;">me</div>
<div class="t" style="left:682.06px;top:652.60px;font-family:'Liberation Serif', serif;font-size:26.0px;color:#111;transform:scaleX(1.0809);transform-origin:0 0;-webkit-text-stroke:0.15px #111;">préserver</div>
<div class="t" style="left:797.31px;top:652.60px;font-family:'Liberation Serif', serif;font-size:26.0px;color:#111;transform:scaleX(1.1207);transform-origin:0 0;-webkit-text-stroke:0.15px #111;">un</div>
<div class="t" style="left:837.15px;top:652.60px;font-family:'Liberation Serif', serif;font-size:26.0px;color:#111;transform:scaleX(1.0833);transform-origin:0 0;-webkit-text-stroke:0.15px #111;">minimum,</div>
<div class="t" style="left:964.45px;top:652.60px;font-family:'Liberation Serif', serif;font-size:26.0px;color:#111;transform:scaleX(1.0940);transform-origin:0 0;-webkit-text-stroke:0.15px #111;">ne</div>
<div class="t" style="left:1002.01px;top:652.60px;font-family:'Liberation Serif', serif;font-size:26.0px;color:#111;transform:scaleX(1.0858);transform-origin:0 0;-webkit-text-stroke:0.15px #111;">laissant</div>
<div class="t" style="left:19.10px;top:680.60px;font-family:'Liberation Serif', serif;font-size:26.0px;color:#111;transform:scaleX(1.1088);transform-origin:0 0;-webkit-text-stroke:0.15px #111;">paraître</div>
<div class="t" style="left:118.09px;top:680.60px;font-family:'Liberation Serif', serif;font-size:26.0px;color:#111;transform:scaleX(1.0778);transform-origin:0 0;-webkit-text-stroke:0.15px #111;">que</div>
<div class="t" style="left:169.53px;top:680.60px;font-family:'Liberation Serif', serif;font-size:26.0px;color:#111;transform:scaleX(1.0154);transform-origin:0 0;-webkit-text-stroke:0.15px #111;">ce</div>
<div class="t" style="left:203.95px;top:680.60px;font-family:'Liberation Serif', serif;font-size:26.0px;color:#111;transform:scaleX(1.0740);transform-origin:0 0;-webkit-text-stroke:0.15px #111;">qui</div>
<div class="t" style="left:250.61px;top:680.60px;font-family:'Liberation Serif', serif;font-size:26.0px;color:#111;transform:scaleX(1.1078);transform-origin:0 0;-webkit-text-stroke:0.15px #111;">pourrait</div>
<div class="t" style="left:352.77px;top:680.60px;font-family:'Liberation Serif', serif;font-size:26.0px;color:#111;transform:scaleX(1.0899);transform-origin:0 0;-webkit-text-stroke:0.15px #111;">passer</div>
<div class="t" style="left:434.57px;top:680.60px;font-family:'Liberation Serif', serif;font-size:26.0px;color:#111;transform:scaleX(1.0778);transform-origin:0 0;-webkit-text-stroke:0.15px #111;">que</div>
<div class="t" style="left:486.00px;top:680.60px;font-family:'Liberation Serif', serif;font-size:26.0px;color:#111;transform:scaleX(1.0988);transform-origin:0 0;-webkit-text-stroke:0.15px #111;">pour</div>
<div class="t" style="left:549.35px;top:680.60px;font-family:'Liberation Serif', serif;font-size:26.0px;color:#111;transform:scaleX(1.0742);transform-origin:0 0;-webkit-text-stroke:0.15px #111;">des</div>
<div class="t" style="left:597.56px;top:680.60px;font-family:'Liberation Serif', serif;font-size:26.0px;color:#111;transform:scaleX(1.0800);transform-origin:0 0;-webkit-text-stroke:0.15px #111;">dépressions</div>
<div class="t" style="left:739.57px;top:680.60px;font-family:'Liberation Serif', serif;font-size:26.0px;color:#111;transform:scaleX(1.0689);transform-origin:0 0;-webkit-text-stroke:0.15px #111;">passagères,</div>
<div class="t" style="left:876.33px;top:680.60px;font-family:'Liberation Serif', serif;font-size:26.0px;color:#111;transform:scaleX(1.0404);transform-origin:0 0;-webkit-text-stroke:0.15px #111;">voire</div>
<div class="t" style="left:942.88px;top:680.60px;font-family:'Liberation Serif', serif;font-size:26.0px;color:#111;transform:scaleX(1.0766);transform-origin:0 0;-webkit-text-stroke:0.15px #111;">saisonnières.</div>
<div class="t" style="left:19.10px;top:708.60px;font-family:'Liberation Serif', serif;font-size:26.0px;color:#111;transform:scaleX(1.0115);transform-origin:0 0;-webkit-text-stroke:0.15px #111;">Alors</div>
<div class="t" style="left:84.23px;top:708.60px;font-family:'Liberation Serif', serif;font-size:26.0px;color:#111;transform:scaleX(1.0778);transform-origin:0 0;-webkit-text-stroke:0.15px #111;">que</div>
<div class="t" style="left:131.37px;top:708.60px;font-family:'Liberation Serif', serif;font-size:26.0px;color:#111;transform:scaleX(1.0330);transform-origin:0 0;-webkit-text-stroke:0.15px #111;">je</div>
<div class="t" style="left:157.44px;top:708.60px;font-family:'Liberation Serif', serif;font-size:26.0px;color:#111;transform:scaleX(1.0741);transform-origin:0 0;-webkit-text-stroke:0.15px #111;">me</div>
<div class="t" style="left:198.24px;top:708.60px;font-family:'Liberation Serif', serif;font-size:26.0px;color:#111;transform:scaleX(1.0822);transform-origin:0 0;-webkit-text-stroke:0.15px #111;">sens</div>
<div class="t" style="left:253.38px;top:708.60px;font-family:'Liberation Serif', serif;font-size:26.0px;color:#111;transform:scaleX(1.1196);transform-origin:0 0;-webkit-text-stroke:0.15px #111;">pourtant</div>
<div class="t" style="left:357.08px;top:708.60px;font-family:'Liberation Serif', serif;font-size:26.0px;color:#111;transform:scaleX(1.0452);transform-origin:0 0;-webkit-text-stroke:0.15px #111;">si</div>
<div class="t" style="left:381.89px;top:708.60px;font-family:'Liberation Serif', serif;font-size:26.0px;color:#111;transform:scaleX(1.0864);transform-origin:0 0;-webkit-text-stroke:0.15px #111;">fondamentalement</div>
<div class="t" style="left:598.78px;top:708.60px;font-family:'Liberation Serif', serif;font-size:26.0px;color:#111;transform:scaleX(1.0531);transform-origin:0 0;-webkit-text-stroke:0.15px #111;">positif</div>
<div class="t" style="left:675.44px;top:708.60px;font-family:'Liberation Serif', serif;font-size:26.0px;color:#111;transform:scaleX(1.1052);transform-origin:0 0;-webkit-text-stroke:0.15px #111;">et</div>
<div class="t" style="left:702.86px;top:708.60px;font-family:'Liberation Serif', serif;font-size:26.0px;color:#111;transform:scaleX(1.0634);transform-origin:0 0;-webkit-text-stroke:0.15px #111;">solaire</div>
<div class="t" style="left:783.25px;top:708.60px;font-family:'Liberation Serif', serif;font-size:26.0px;color:#111;transform:scaleX(1.0990);transform-origin:0 0;-webkit-text-stroke:0.15px #111;">au</div>
<div class="t" style="left:816.91px;top:708.60px;font-family:'Liberation Serif', serif;font-size:26.0px;color:#111;transform:scaleX(1.0458);transform-origin:0 0;-webkit-text-stroke:0.15px #111;">fin</div>
<div class="t" style="left:853.80px;top:708.60px;font-family:'Liberation Serif', serif;font-size:26.0px;color:#111;transform:scaleX(1.0637);transform-origin:0 0;-webkit-text-stroke:0.15px #111;">fond</div>
<div class="t" style="left:911.19px;top:708.60px;font-family:'Liberation Serif', serif;font-size:26.0px;color:#111;transform:scaleX(1.0771);transform-origin:0 0;-webkit-text-stroke:0.15px #111;">de</div>
<div class="t" style="left:944.31px;top:708.60px;font-family:'Liberation Serif', serif;font-size:26.0px;color:#111;transform:scaleX(1.0870);transform-origin:0 0;-webkit-text-stroke:0.15px #111;">mon</div>
<div class="t" style="left:1001.25px;top:708.60px;font-family:'Liberation Serif', serif;font-size:26.0px;color:#111;transform:scaleX(1.1055);transform-origin:0 0;-webkit-text-stroke:0.15px #111;">être</div>
<div class="t" style="left:1051.01px;top:708.60px;font-family:'Liberation Serif', serif;font-size:26.0px;color:#111;transform:scaleX(1.0740);transform-origin:0 0;-webkit-text-stroke:0.15px #111;">qui</div>
<div class="t" style="left:19.10px;top:736.60px;font-family:'Liberation Serif', serif;font-size:26.0px;color:#111;transform:scaleX(1.1129);transform-origin:0 0;-webkit-text-stroke:0.15px #111;">tente</div>
<div class="t" style="left:82.11px;top:736.60px;font-family:'Liberation Serif', serif;font-size:26.0px;color:#111;transform:scaleX(1.0771);transform-origin:0 0;-webkit-text-stroke:0.15px #111;">de</div>
<div class="t" style="left:115.32px;top:736.60px;font-family:'Liberation Serif', serif;font-size:26.0px;color:#111;transform:scaleX(1.0888);transform-origin:0 0;-webkit-text-stroke:0.15px #111;">subsister</div>
<div class="t" style="left:221.18px;top:736.60px;font-family:'Liberation Serif', serif;font-size:26.0px;color:#111;transform:scaleX(1.1013);transform-origin:0 0;-webkit-text-stroke:0.15px #111;">dans</div>
<div class="t" style="left:280.46px;top:736.60px;font-family:'Liberation Serif', serif;font-size:26.0px;color:#111;transform:scaleX(1.0407);transform-origin:0 0;-webkit-text-stroke:0.15px #111;">les</div>
<div class="t" style="left:317.29px;top:736.60px;font-family:'Liberation Serif', serif;font-size:26.0px;color:#111;transform:scaleX(1.0677);transform-origin:0 0;-webkit-text-stroke:0.15px #111;">obscures</div>
<div class="t" style="left:421.21px;top:736.60px;font-family:'Liberation Serif', serif;font-size:26.0px;color:#111;transform:scaleX(1.0819);transform-origin:0 0;-webkit-text-stroke:0.15px #111;">profondeurs.</div>
<div class="t" style="left:570.95px;top:736.60px;font-family:'Liberation Serif', serif;font-size:26.0px;color:#111;transform:scaleX(1.1558);transform-origin:0 0;-webkit-text-stroke:0.15px #111;">Je</div>
<div class="t" style="left:602.77px;top:736.60px;font-family:'Liberation Serif', serif;font-size:26.0px;color:#111;transform:scaleX(1.0867);transform-origin:0 0;-webkit-text-stroke:0.15px #111;">demeure</div>
<div class="t" style="left:706.82px;top:736.60px;font-family:'Liberation Serif', serif;font-size:26.0px;color:#111;transform:scaleX(1.0905);transform-origin:0 0;-webkit-text-stroke:0.15px #111;">cependant</div>
<div class="t" style="left:828.53px;top:736.60px;font-family:'Liberation Serif', serif;font-size:26.0px;color:#111;transform:scaleX(1.0725);transform-origin:0 0;-webkit-text-stroke:0.15px #111;">engourdi,</div>
<div class="t" style="left:941.39px;top:736.60px;font-family:'Liberation Serif', serif;font-size:26.0px;color:#111;transform:scaleX(1.1003);transform-origin:0 0;-webkit-text-stroke:0.15px #111;">éteint</div>
<div class="t" style="left:1011.72px;top:736.60px;font-family:'Liberation Serif', serif;font-size:26.0px;color:#111;transform:scaleX(1.0706);transform-origin:0 0;-webkit-text-stroke:0.15px #111;">même,</div>
<div class="t" style="left:19.10px;top:764.60px;font-family:'Liberation Serif', serif;font-size:26.0px;color:#111;transform:scaleX(1.0074);transform-origin:0 0;-webkit-text-stroke:0.15px #111;">groggy</div>
<div class="t" style="left:100.15px;top:764.60px;font-family:'Liberation Serif', serif;font-size:26.0px;color:#111;transform:scaleX(1.0733);transform-origin:0 0;-webkit-text-stroke:0.15px #111;">tel</div>
<div class="t" style="left:134.89px;top:764.60px;font-family:'Liberation Serif', serif;font-size:26.0px;color:#111;transform:scaleX(1.1207);transform-origin:0 0;-webkit-text-stroke:0.15px #111;">un</div>
<div class="t" style="left:170.86px;top:764.60px;font-family:'Liberation Serif', serif;font-size:26.0px;color:#111;transform:scaleX(1.0631);transform-origin:0 0;-webkit-text-stroke:0.15px #111;">boxeur</div>
<div class="t" style="left:254.45px;top:764.60px;font-family:'Liberation Serif', serif;font-size:26.0px;color:#111;transform:scaleX(1.0628);transform-origin:0 0;-webkit-text-stroke:0.15px #111;">éprouvé</div>
<div class="t" style="left:350.30px;top:764.60px;font-family:'Liberation Serif', serif;font-size:26.0px;color:#111;transform:scaleX(1.1180);transform-origin:0 0;-webkit-text-stroke:0.15px #111;">par</div>
<div class="t" style="left:394.26px;top:764.60px;font-family:'Liberation Serif', serif;font-size:26.0px;color:#111;transform:scaleX(1.0407);transform-origin:0 0;-webkit-text-stroke:0.15px #111;">les</div>
<div class="t" style="left:431.16px;top:764.60px;font-family:'Liberation Serif', serif;font-size:26.0px;color:#111;transform:scaleX(1.0597);transform-origin:0 0;-webkit-text-stroke:0.15px #111;">coups</div>
<div class="t" style="left:502.28px;top:764.60px;font-family:'Liberation Serif', serif;font-size:26.0px;color:#111;transform:scaleX(1.0771);transform-origin:0 0;-webkit-text-stroke:0.15px #111;">de</div>
<div class="t" style="left:535.56px;top:764.60px;font-family:'Liberation Serif', serif;font-size:26.0px;color:#111;transform:scaleX(1.0605);transform-origin:0 0;-webkit-text-stroke:0.15px #111;">ses</div>
<div class="t" style="left:576.10px;top:764.60px;font-family:'Liberation Serif', serif;font-size:26.0px;color:#111;transform:scaleX(1.0720);transform-origin:0 0;-webkit-text-stroke:0.15px #111;">adversaires.</div>
<div class="t" style="left:715.25px;top:764.60px;font-family:'Liberation Serif', serif;font-size:26.0px;color:#111;transform:scaleX(1.0358);transform-origin:0 0;-webkit-text-stroke:0.15px #111;">Car</div>
<div class="t" style="left:760.98px;top:764.60px;font-family:'Liberation Serif', serif;font-size:26.0px;color:#111;transform:scaleX(1.0291);transform-origin:0 0;-webkit-text-stroke:0.15px #111;">ils</div>
<div class="t" style="left:793.11px;top:764.60px;font-family:'Liberation Serif', serif;font-size:26.0px;color:#111;transform:scaleX(0.8961);transform-origin:0 0;-webkit-text-stroke:0.15px #111;">s’y</div>
<div class="t" style="left:828.42px;top:764.60px;font-family:'Liberation Serif', serif;font-size:26.0px;color:#111;transform:scaleX(1.1143);transform-origin:0 0;-webkit-text-stroke:0.15px #111;">mettent</div>
<div class="t" style="left:922.15px;top:764.60px;font-family:'Liberation Serif', serif;font-size:26.0px;color:#111;transform:scaleX(1.0910);transform-origin:0 0;-webkit-text-stroke:0.15px #111;">à</div>
<div class="t" style="left:941.59px;top:764.60px;font-family:'Liberation Serif', serif;font-size:26.0px;color:#111;transform:scaleX(1.0779);transform-origin:0 0;-webkit-text-stroke:0.15px #111;">plusieurs,</div>
<div class="t" style="left:1056.63px;top:764.60px;font-family:'Liberation Serif', serif;font-size:26.0px;color:#111;transform:scaleX(1.0407);transform-origin:0 0;-webkit-text-stroke:0.15px #111;">les</div>
<div class="t" style="left:19.10px;top:792.60px;font-family:'Liberation Serif', serif;font-size:26.0px;color:#111;transform:scaleX(1.0537);transform-origin:0 0;-webkit-text-stroke:0.15px #111;">lâches,</div>
<div class="t" style="left:100.44px;top:792.60px;font-family:'Liberation Serif', serif;font-size:26.0px;color:#111;transform:scaleX(1.0910);transform-origin:0 0;-webkit-text-stroke:0.15px #111;">à</div>
<div class="t" style="left:119.06px;top:792.60px;font-family:'Liberation Serif', serif;font-size:26.0px;color:#111;transform:scaleX(1.0741);transform-origin:0 0;-webkit-text-stroke:0.15px #111;">me</div>
<div class="t" style="left:159.21px;top:792.60px;font-family:'Liberation Serif', serif;font-size:26.0px;color:#111;transform:scaleX(1.1164);transform-origin:0 0;-webkit-text-stroke:0.15px #111;">tourner</div>
<div class="t" style="left:249.08px;top:792.60px;font-family:'Liberation Serif', serif;font-size:26.0px;color:#111;transform:scaleX(1.1098);transform-origin:0 0;-webkit-text-stroke:0.15px #111;">autour</div>
<div class="t" style="left:328.83px;top:792.60px;font-family:'Liberation Serif', serif;font-size:26.0px;color:#111;transform:scaleX(1.0988);transform-origin:0 0;-webkit-text-stroke:0.15px #111;">pour</div>
<div class="t" style="left:387.24px;top:792.60px;font-family:'Liberation Serif', serif;font-size:26.0px;color:#111;transform:scaleX(1.0625);transform-origin:0 0;-webkit-text-stroke:0.15px #111;">m’étourdir</div>
<div class="t" style="left:511.41px;top:792.60px;font-family:'Liberation Serif', serif;font-size:26.0px;color:#111;transform:scaleX(1.1052);transform-origin:0 0;-webkit-text-stroke:0.15px #111;">et</div>
<div class="t" style="left:538.18px;top:792.60px;font-family:'Liberation Serif', serif;font-size:26.0px;color:#111;transform:scaleX(1.0522);transform-origin:0 0;-webkit-text-stroke:0.15px #111;">mieux</div>
<div class="t" style="left:612.61px;top:792.60px;font-family:'Liberation Serif', serif;font-size:26.0px;color:#111;transform:scaleX(1.0741);transform-origin:0 0;-webkit-text-stroke:0.15px #111;">me</div>
<div class="t" style="left:652.75px;top:792.60px;font-family:'Liberation Serif', serif;font-size:26.0px;color:#111;transform:scaleX(1.0272);transform-origin:0 0;-webkit-text-stroke:0.15px #111;">castagner…</div>
<div class="t" style="left:56.60px;top:820.60px;font-family:'Liberation Serif', serif;font-size:26.0px;color:#111;transform:scaleX(1.0676);transform-origin:0 0;-webkit-text-stroke:0.15px #111;">Certains</div>
<div class="t" style="left:158.70px;top:820.60px;font-family:'Liberation Serif', serif;font-size:26.0px;color:#111;transform:scaleX(1.1075);transform-origin:0 0;-webkit-text-stroke:0.15px #111;">diront</div>
<div class="t" style="left:237.07px;top:820.60px;font-family:'Liberation Serif', serif;font-size:26.0px;color:#111;transform:scaleX(1.0778);transform-origin:0 0;-webkit-text-stroke:0.15px #111;">que</div>
<div class="t" style="left:287.11px;top:820.60px;font-family:'Liberation Serif', serif;font-size:26.0px;color:#111;transform:scaleX(1.0040);transform-origin:0 0;-webkit-text-stroke:0.15px #111;">j’exagère</div>
<div class="t" style="left:393.79px;top:820.60px;font-family:'Liberation Serif', serif;font-size:26.0px;color:#111;transform:scaleX(1.0741);transform-origin:0 0;-webkit-text-stroke:0.15px #111;">mais</div>
<div class="t" style="left:456.12px;top:820.60px;font-family:'Liberation Serif', serif;font-size:26.0px;color:#111;transform:scaleX(1.0625);transform-origin:0 0;-webkit-text-stroke:0.15px #111;">seuls</div>
<div class="t" style="left:520.95px;top:820.60px;font-family:'Liberation Serif', serif;font-size:26.0px;color:#111;transform:scaleX(1.0776);transform-origin:0 0;-webkit-text-stroke:0.15px #111;">peuvent</div>
<div class="t" style="left:619.23px;top:820.60px;font-family:'Liberation Serif', serif;font-size:26.0px;color:#111;transform:scaleX(1.0865);transform-origin:0 0;-webkit-text-stroke:0.15px #111;">comprendre</div>
<div class="t" style="left:763.72px;top:820.60px;font-family:'Liberation Serif', serif;font-size:26.0px;color:#111;transform:scaleX(1.0267);transform-origin:0 0;-webkit-text-stroke:0.15px #111;">ceux</div>
<div class="t" style="left:823.70px;top:820.60px;font-family:'Liberation Serif', serif;font-size:26.0px;color:#111;transform:scaleX(1.0740);transform-origin:0 0;-webkit-text-stroke:0.15px #111;">qui</div>
<div class="t" style="left:868.98px;top:820.60px;font-family:'Liberation Serif', serif;font-size:26.0px;color:#111;transform:scaleX(1.0866);transform-origin:0 0;-webkit-text-stroke:0.15px #111;">subissent</div>
<div class="t" style="left:982.16px;top:820.60px;font-family:'Liberation Serif', serif;font-size:26.0px;color:#111;transform:scaleX(1.0400);transform-origin:0 0;-webkit-text-stroke:0.15px #111;">eux</div>
<div class="t" style="left:1030.79px;top:820.60px;font-family:'Liberation Serif', serif;font-size:26.0px;color:#111;transform:scaleX(1.0752);transform-origin:0 0;-webkit-text-stroke:0.15px #111;">aussi</div>
<div class="t" style="left:19.10px;top:848.60px;font-family:'Liberation Serif', serif;font-size:26.0px;color:#111;transform:scaleX(1.0982);transform-origin:0 0;-webkit-text-stroke:0.15px #111;">une</div>
<div class="t" style="left:68.01px;top:848.60px;font-family:'Liberation Serif', serif;font-size:26.0px;color:#111;transform:scaleX(1.0452);transform-origin:0 0;-webkit-text-stroke:0.15px #111;">si</div>
<div class="t" style="left:93.82px;top:848.60px;font-family:'Liberation Serif', serif;font-size:26.0px;color:#111;transform:scaleX(1.0664);transform-origin:0 0;-webkit-text-stroke:0.15px #111;">perfide</div>
<div class="t" style="left:180.01px;top:848.60px;font-family:'Liberation Serif', serif;font-size:26.0px;color:#111;transform:scaleX(1.0388);transform-origin:0 0;-webkit-text-stroke:0.15px #111;">famille</div>
<div class="t" style="left:264.19px;top:848.60px;font-family:'Liberation Serif', serif;font-size:26.0px;color:#111;transform:scaleX(1.0740);transform-origin:0 0;-webkit-text-stroke:0.15px #111;">qui</div>
<div class="t" style="left:307.56px;top:848.60px;font-family:'Liberation Serif', serif;font-size:26.0px;color:#111;transform:scaleX(1.0774);transform-origin:0 0;-webkit-text-stroke:0.15px #111;">ressasse</div>
<div class="t" style="left:405.48px;top:848.60px;font-family:'Liberation Serif', serif;font-size:26.0px;color:#111;transform:scaleX(1.0807);transform-origin:0 0;-webkit-text-stroke:0.15px #111;">indéfiniment</div>
<div class="t" style="left:556.74px;top:848.60px;font-family:'Liberation Serif', serif;font-size:26.0px;color:#111;transform:scaleX(1.0724);transform-origin:0 0;-webkit-text-stroke:0.15px #111;">mes</div>
<div class="t" style="left:609.34px;top:848.60px;font-family:'Liberation Serif', serif;font-size:26.0px;color:#111;transform:scaleX(1.0452);transform-origin:0 0;-webkit-text-stroke:0.15px #111;">si</div>
<div class="t" style="left:635.14px;top:848.60px;font-family:'Liberation Serif', serif;font-size:26.0px;color:#111;transform:scaleX(1.0770);transform-origin:0 0;-webkit-text-stroke:0.15px #111;">nombreux</div>
<div class="t" style="left:756.36px;top:848.60px;font-family:'Liberation Serif', serif;font-size:26.0px;color:#111;transform:scaleX(1.1052);transform-origin:0 0;-webkit-text-stroke:0.15px #111;">et</div>
<div class="t" style="left:784.77px;top:848.60px;font-family:'Liberation Serif', serif;font-size:26.0px;color:#111;transform:scaleX(1.0935);transform-origin:0 0;-webkit-text-stroke:0.15px #111;">dégradants</div>
<div class="t" style="left:915.61px;top:848.60px;font-family:'Liberation Serif', serif;font-size:26.0px;color:#111;transform:scaleX(1.0663);transform-origin:0 0;-webkit-text-stroke:0.15px #111;">revers.</div>
<div class="t" style="left:997.94px;top:848.60px;font-family:'Liberation Serif', serif;font-size:26.0px;color:#111;transform:scaleX(1.0163);transform-origin:0 0;-webkit-text-stroke:0.15px #111;">De</div>
<div class="t" style="left:1036.44px;top:848.60px;font-family:'Liberation Serif', serif;font-size:26.0px;color:#111;transform:scaleX(1.0870);transform-origin:0 0;-webkit-text-stroke:0.15px #111;">mon</div>
<div class="t" style="left:928.40px;top:401.00px;font-family:'Liberation Serif', serif;font-size:15px;color:#1c1cb4;transform:scaleX(1.2400);transform-origin:0 0;-webkit-text-stroke:0.3px #1c1cb4;">2</div>
</body></html>
